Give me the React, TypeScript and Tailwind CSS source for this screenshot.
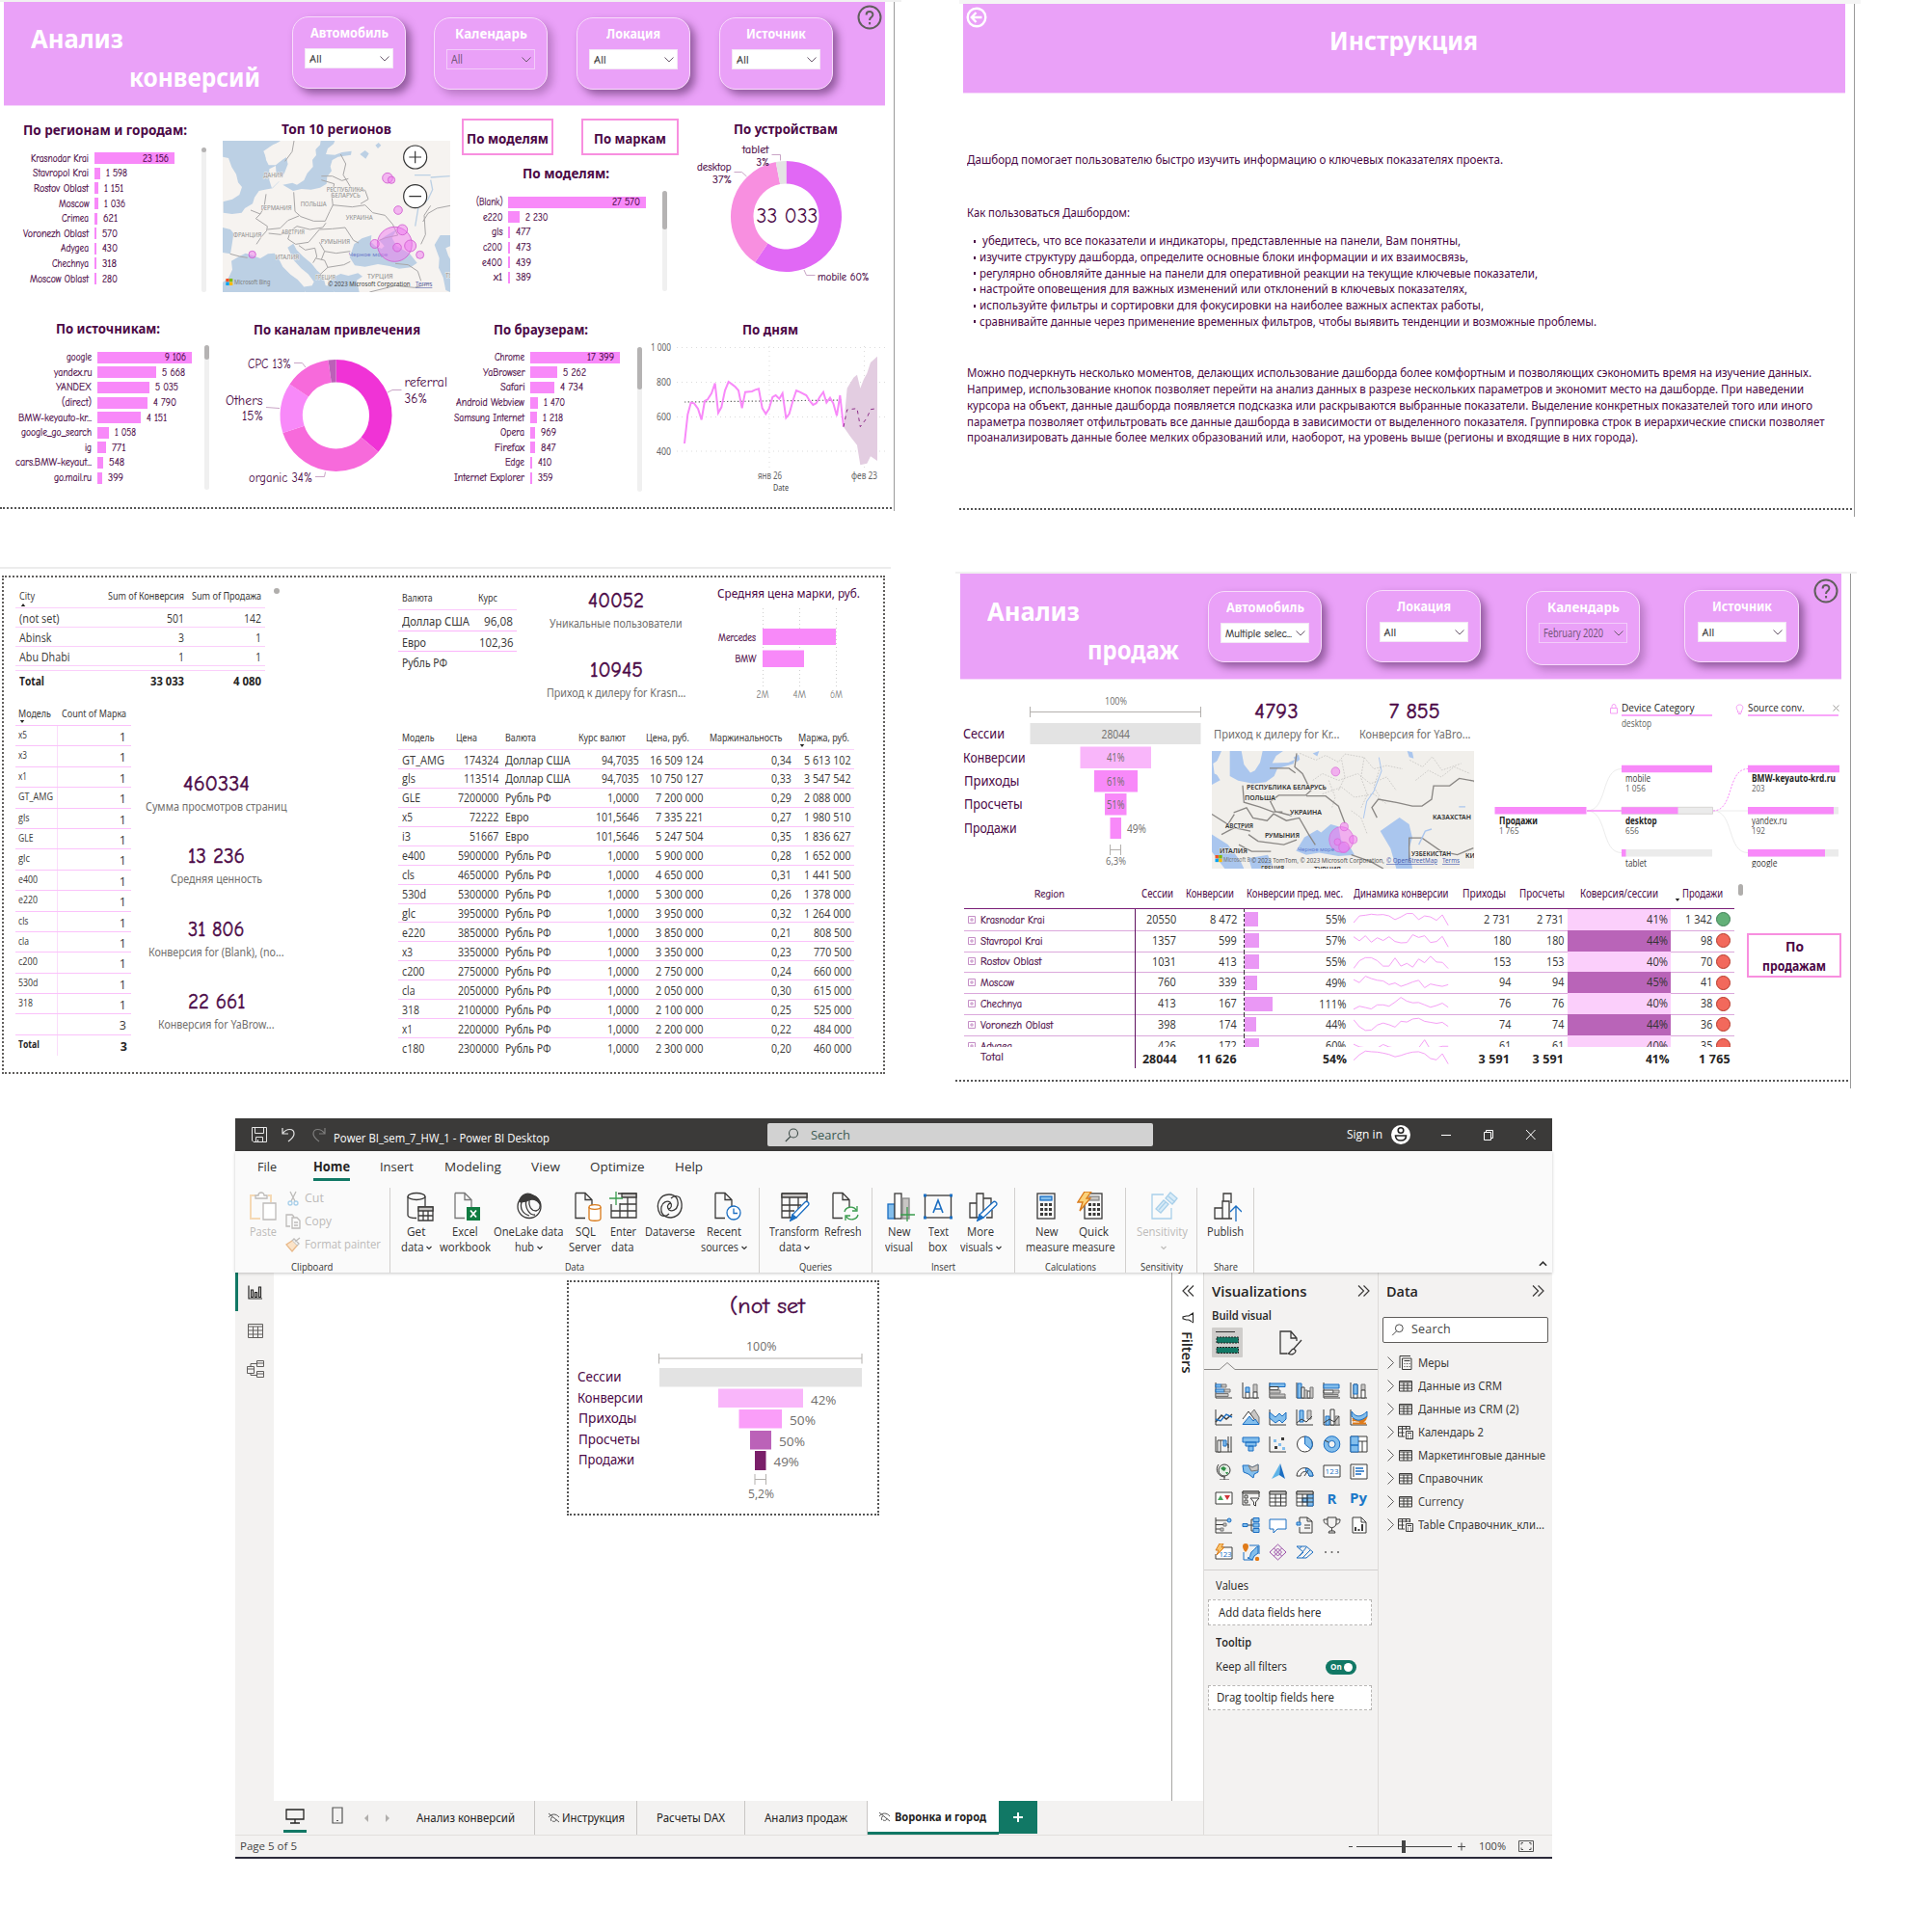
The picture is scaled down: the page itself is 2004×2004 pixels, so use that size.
import { useLayoutEffect, useRef, type ReactNode } from "react";

const COMIC = "font-['Comic_Neue','Noto_Sans',sans-serif]";
const SEGOE = "font-['Open_Sans','Noto_Sans',sans-serif]";
const CYRILLIC = "font-['Noto_Sans',sans-serif]";
const hasCyrillic = (s: string) => /[а-яё]/i.test(s);

/* One line of text that fills the given width: tracked out when short, condensed when long. */
function T({ w, className = "", children }: { w: number; className?: string; children: string }) {
  const ref = useRef<HTMLSpanElement>(null);
  useLayoutEffect(() => {
    const el = ref.current;
    if (!el) return;
    el.style.letterSpacing = "0px";
    el.style.transform = "none";
    const natural = el.getBoundingClientRect().width;
    if (natural > w) el.style.transform = `scaleX(${w / natural})`;
    else el.style.letterSpacing = `${(w - natural) / children.length}px`;
  }, [w, children]);
  return (
    <span className={`inline-block shrink-0 whitespace-pre ${className}`} style={{ width: w }}>
      <span ref={ref} className={`inline-block origin-left ${hasCyrillic(children) ? CYRILLIC : ""}`}>{children}</span>
    </span>
  );
}

type XProps = { x: number; y: number; w?: number; s?: number; a?: "start" | "middle" | "end"; f?: string; b?: number; children: string };
function X({ x, y, w, s = 12, a = "start", f = "#4b0846", b = 400, children }: XProps) {
  return (
    <text x={x} y={y} fontSize={s} textAnchor={a} textLength={w} lengthAdjust="spacingAndGlyphs" fill={f} fontWeight={b} className={hasCyrillic(children) ? CYRILLIC : ""}>
      {children}
    </text>
  );
}

/* ---------- shared dashboard pieces ---------- */

function HelpIcon({ className = "" }: { className?: string }) {
  return (
    <svg viewBox="0 0 26 26" className={`h-[26px] w-[26px] shrink-0 ${className}`} fill="none" stroke="#605e5c" strokeWidth="2">
      <circle cx="13" cy="13" r="11.5" />
      <path d="M9.6 10.4c0-4.4 6.8-4.4 6.8-.2 0 2.6-3.3 2.8-3.3 5.2v.6" />
      <path d="M13.1 18v2.4" />
    </svg>
  );
}

function Slicer({ title, tw, value, vw, off, className }: { title: string; tw: number; value: string; vw: number; off?: boolean; className: string }) {
  return (
    <div
      className={`flex shrink-0 flex-col items-center rounded-[17px] border border-[#f8dcfb] bg-[#eaa1f8] ${
        off ? "shadow-[5px_5px_9px_rgba(60,20,70,0.28)]" : "shadow-[5px_5px_8px_rgba(60,20,70,0.5)]"
      } ${className}`}
    >
      <T w={tw} className="mt-[6px] text-sm leading-5 font-bold text-white">{title}</T>
      <div
        className={`mt-[5px] flex h-[21px] w-[92px] items-center justify-between border pr-[3px] pl-1 text-xs ${
          off ? `border-[#f3ccfa] bg-transparent text-[#6d5273] ${SEGOE}` : "border-[#f3e6f5] bg-white text-[#333] [-webkit-text-stroke:0.2px_#333]"
        }`}
      >
        <T w={vw}>{value}</T>
        <svg viewBox="0 0 10 6" className="h-[6px] w-[10px]" fill="none" stroke="#6b5b6e" strokeWidth="1">
          <path d="M.5.5 5 5 9.5.5" />
        </svg>
      </div>
    </div>
  );
}

function Ruler({ w }: { w: string }) {
  return <div className={`h-[2px] shrink-0 bg-[#f1f1f1] ${w}`} />;
}

type Bar = [label: string, labelW: number, bar: number, value: string, valueW: number];

function Bars({ rows, labelClass, thumb, className, trackClass }: { rows: Bar[]; labelClass: string; thumb: string; className: string; trackClass: string }) {
  return (
    <div className="flex">
      <ul className={`shrink-0 ${className}`}>
        {rows.map(([label, lw, bar, value, vw], i) => (
          <li key={label} className="flex h-[15.6px] items-center text-xs leading-[15px] [-webkit-text-stroke:0.2px_#4b0846]">
            <span className={`flex shrink-0 justify-end ${labelClass}`}>
              <T w={lw}>{label}</T>
            </span>
            <span className="ml-[6px] flex h-3 shrink-0 items-center justify-end bg-[#f889f9]" style={{ width: bar, paddingRight: i ? 0 : 6 }}>
              {i === 0 && <T w={vw}>{value}</T>}
            </span>
            {i > 0 && <T w={vw} className="ml-[6px]">{value}</T>}
          </li>
        ))}
      </ul>
      <div className={`w-[5px] rounded-full bg-[#f0f0f0] ${trackClass}`}>
        <div className={`w-[5px] rounded-full bg-[#b5b3b3] ${thumb}`} />
      </div>
    </div>
  );
}

/* Ring segment between two fractions of the circle, clockwise from the top. */
function arc(cx: number, cy: number, R: number, r: number, from: number, to: number) {
  const p = (rad: number, t: number) => {
    const a = 2 * Math.PI * t;
    return `${(cx + rad * Math.sin(a)).toFixed(2)} ${(cy - rad * Math.cos(a)).toFixed(2)}`;
  };
  const big = to - from > 0.5 ? 1 : 0;
  return `M${p(R, from)}A${R} ${R} 0 ${big} 1 ${p(R, to)}L${p(r, to)}A${r} ${r} 0 ${big} 0 ${p(r, from)}Z`;
}

/* ---------- panel 1: conversions ---------- */

const regions: Bar[] = [
  ["Krasnodar Krai", 60, 83, "23 156", 27],
  ["Stavropol Krai", 58, 6, "1 598", 22],
  ["Rostov Oblast", 57, 4, "1 151", 20],
  ["Moscow", 31.5, 4, "1 036", 22],
  ["Crimea", 28, 2.5, "621", 15],
  ["Voronezh Oblast", 68, 2, "570", 16],
  ["Adygea", 29, 2, "430", 16],
  ["Chechnya", 38, 1.5, "318", 15],
  ["Moscow Oblast", 61, 1.5, "280", 16],
];
const models: Bar[] = [
  ["(Blank)", 27.5, 143, "27 570", 29],
  ["e220", 20.5, 12, "2 230", 23.5],
  ["gls", 11.5, 2, "477", 15.5],
  ["c200", 20, 2, "473", 16],
  ["e400", 21, 2, "439", 16],
  ["x1", 9, 2, "389", 16],
];
const sources: Bar[] = [
  ["google", 26, 98, "9 106", 22],
  ["yandex.ru", 39.5, 61, "5 668", 24],
  ["YANDEX", 37, 54, "5 035", 24],
  ["(direct)", 31, 52, "4 790", 24],
  ["BMW-keyauto-kr...", 76, 45, "4 151", 21],
  ["google_go_search", 73, 12, "1 058", 22],
  ["ig", 7, 9, "771", 14.5],
  ["cars.BMW-keyaut...", 79, 6, "548", 16],
  ["go.mail.ru", 39, 5, "399", 16],
];
const browsers: Bar[] = [
  ["Chrome", 31, 93, "17 399", 28],
  ["YaBrowser", 43.5, 28, "5 262", 24],
  ["Safari", 25.5, 25, "4 734", 24],
  ["Android Webview", 71, 8, "1 470", 22],
  ["Samsung Internet", 73, 6.5, "1 218", 21],
  ["Opera", 25, 5, "969", 16],
  ["Firefox", 31, 4.5, "847", 15.5],
  ["Edge", 20, 2, "410", 14.5],
  ["Internet Explorer", 73, 2, "359", 15.5],
];

function MsLogo({ x, y, s }: { x: number; y: number; s: number }) {
  return (
    <g>
      <rect x={x} y={y} width={s} height={s} fill="#f25022" />
      <rect x={x + s * 1.1} y={y} width={s} height={s} fill="#7fba00" />
      <rect x={x} y={y + s * 1.1} width={s} height={s} fill="#00a4ef" />
      <rect x={x + s * 1.1} y={y + s * 1.1} width={s} height={s} fill="#ffb900" />
    </g>
  );
}

function EuropeMap() {
  return (
    <svg viewBox="693 438 708 471" className="h-[157px] w-[236px] font-['Noto_Sans',sans-serif]">
      <rect x="693" y="438" width="708" height="471" fill="#f6f3f0" />
      <g fill="#bcd0e4">
        <path d="M693 438h180l-22 14-12 6-14 18 3 22 8 16 22 0 22-18 12-8 4 22-10 26-14 26-24 24-24 4-18 4-14 20-6 20-24 14-10 14-30 4-27-4z" />
        <path d="M880 575l30-6 14 6 22-14 10-22 18-20-2-22 12-14-2-18 14-14 2-13h44l-4 10-18 14-6 18 28 2 22-8 30-4-2 12-40 6-18 10-6 20 4 14-14 18-2 22-20 12-28 6-30-2-26 6z" />
        <path d="M693 708l24 6 10 12-4 28-6 36-24-4zM720 812l24-14 20-10 24 8 22 8 24-14 20-2 14 18 12 24 24 24 22 16 18 20 6 19H693v-30l18-14 12-26z" />
        <path d="M895 770l18-12 10 20 20 20 26 22 18 22 18 16 8 30 16 6 12 15h-90l-10-16 30-4 6-12-18-24-22-18-22-24z" />
        <path d="M1018 890l16-26 26-12 24 6 30-8 14 10-18 12 8 37h-76z" />
        <path d="M1088 800l14-40 24-18 30-10-2 20 14 14 20 8 8-8-16-18 20-14 34-20-14 26 14 26 40 22 24 30-20 14-36 4-30-8-36-6-40 8-32-4z" />
        <path d="M1352 762l18-30 31 0v34l-14 6 8 24 6 10v103l-14-6-8-40-14-30 2-30zM840 838l14-8 6 20-8 24-14-8zM846 796l8-6 4 24-8 8z" />
        <path d="M1120 480l16-12 12 10-10 16zM1168 452l10-8 8 8-10 10z" />
      </g>
      <g fill="#f6f3f0">
        <path d="M693 488l18 4 10 28 14 22 6 26 12 14-8 24-22 14-30 8z" />
        <path d="M838 526l20-10 2 30 14-2 6 16-14 6-20 20-8-26z" />
        <path d="M820 470l30-20 32-12h110l-10 26-8 30-20 22-16 36-14 10-14-18-14-36-6-20-18 14-26 6-16-12z" />
      </g>
      <g fill="none" stroke="#a8a6a6" strokeWidth="3">
        <path d="M915 438l-6 34-22 30M1060 480l16 30-8 34 24 40 44 8 10 28-24 14M1000 548l34 0 30 14 20-6M1000 560l40 12-8 34 4 34M914 598l4 60 18 16 40 14 36 0 14-30 10-20 60 6 40-6 24 24 38 8 24 28 16 34-38 8-20 8" />
        <path d="M828 604l-6 40-12 22-30-12M810 666l-14 14 36 24-2 14-16 18-16 24M832 714l40-4 24-24 34-14M836 726l38 4 30-12 20-14 40 10 40-6 10-14M904 718l-8 26 24 16 40-6 34-40 40-2 40-4 26 40 16 8M994 754l16 28 36 6 44-6M930 764l20 14 30-6 6 26-12 20M984 804l26 6 10 22-24 22M1020 832l50-8 20-10M1010 782l-10 26M716 790l30 8 24 4M1230 820l40 4 30 20 10 30M1150 909l80-20 60 6 50-14M1340 640l-20 30 4 60-14 30M1316 690l16-26 28-16 41-8" />
      </g>
      <path d="M1340 560l6 30-14 30-30 24-10 60M1290 545l50 0M1400 548l-60 4" fill="none" stroke="#bcd0e4" strokeWidth="4" />
      <g fill="#8d8d8d" fontSize="19" stroke="#f6f3f0" strokeWidth="3" paintOrder="stroke">
        <text x="820" y="551" textLength="60" lengthAdjust="spacingAndGlyphs">ДАНИЯ</text>
        <text x="1016" y="596" textLength="116" lengthAdjust="spacingAndGlyphs">РЕСПУБЛИКА</text>
        <text x="1031" y="614" textLength="90" lengthAdjust="spacingAndGlyphs">БЕЛАРУСЬ</text>
        <text x="935" y="641" textLength="81" lengthAdjust="spacingAndGlyphs">ПОЛЬША</text>
        <text x="812" y="654" textLength="96" lengthAdjust="spacingAndGlyphs">ГЕРМАНИЯ</text>
        <text x="1076" y="684" textLength="84" lengthAdjust="spacingAndGlyphs">УКРАИНА</text>
        <text x="726" y="737" textLength="88" lengthAdjust="spacingAndGlyphs">ФРАНЦИЯ</text>
        <text x="876" y="729" textLength="72" lengthAdjust="spacingAndGlyphs">АВСТРИЯ</text>
        <text x="998" y="758" textLength="91" lengthAdjust="spacingAndGlyphs">РУМЫНИЯ</text>
        <text x="857" y="807" textLength="74" lengthAdjust="spacingAndGlyphs">ИТАЛИЯ</text>
        <text x="982" y="869" textLength="62" lengthAdjust="spacingAndGlyphs">ГРЕЦИЯ</text>
        <text x="1143" y="868" textLength="80" lengthAdjust="spacingAndGlyphs">ТУРЦИЯ</text>
        <text x="1386" y="864">ТУ</text>
      </g>
      <text x="1085" y="799" fontSize="18" textLength="122" lengthAdjust="spacingAndGlyphs" fill="#6c77c9">Черное море</text>
      <g fill="#f07af0" fillOpacity=".5" stroke="#d05cd0" strokeWidth="2.5">
        <circle cx="1228" cy="760" r="54" />
        <circle cx="1206" cy="554" r="16" />
        <circle cx="1218" cy="560" r="11" />
        <circle cx="1239" cy="654" r="13" />
        <circle cx="1252" cy="715" r="16" />
        <circle cx="1166" cy="759" r="13.5" />
        <circle cx="1236" cy="770" r="13" />
        <circle cx="1277" cy="765" r="18" />
        <circle cx="1307" cy="793" r="12" />
        <circle cx="785" cy="792" r="11" />
      </g>
      <g fill="#fff" stroke="#333" strokeWidth="3.5">
        <circle cx="1292" cy="489" r="36" />
        <circle cx="1292" cy="611" r="36" />
        <path d="M1273 489h38M1292 470v38M1273 611h38" />
      </g>
      <MsLogo x={703} y={867} s={10} />
      <text x="729" y="886" fontSize="19" textLength="112" lengthAdjust="spacingAndGlyphs" fill="#7a7a7a">Microsoft Bing</text>
      <text x="1020" y="891" fontSize="19" textLength="257" lengthAdjust="spacingAndGlyphs" fill="#444">© 2023 Microsoft Corporation</text>
      <text x="1293" y="891" fontSize="19" textLength="52" lengthAdjust="spacingAndGlyphs" fill="#5a65a8" textDecoration="underline">Terms</text>
    </svg>
  );
}

const dayLine =
  "750,450 760,360 770,323 780,325 792,342 803,376 813,318 822,313 834,294 845,263 855,355 865,337 876,285 887,258 898,266 908,274 918,285 929,340 939,290 960,288 970,283 981,280 992,340 1003,358 1013,342 1024,306 1034,300 1045,311 1055,294 1066,370 1076,358 1087,318 1098,285 1109,290 1129,300 1140,318 1150,330 1160,325 1171,305 1182,290 1192,323 1203,308 1213,325 1224,364 1234,300 1245,398";

function Conversions() {
  return (
    <section className={`flex h-[530px] w-[928px] flex-col border-r border-[#9a9a9a] text-[#4b0846] ${COMIC}`}>
      <Ruler w="w-[935px]" />
      <header className="ml-1 flex h-[108px] w-[914px] shrink-0 border-b border-[#f6d5fb] bg-[#eaa1f8]">
        <h1 className="flex w-[299px] shrink-0 flex-col pt-[19px] pl-7 text-[27px] leading-[38px] font-bold text-white">
          <T w={96}>Анализ</T>
          <T w={136} className="ml-[102px]">конверсий</T>
        </h1>
        <Slicer title="Автомобиль" tw={81} value="All" vw={13} className="mt-[15px] h-[75px] w-[118px]" />
        <Slicer title="Календарь" tw={75} value="All" vw={12} off className="mt-4 ml-[29px] h-[75px] w-[118px]" />
        <Slicer title="Локация" tw={56} value="All" vw={13} className="mt-4 ml-[30px] h-[75px] w-[118px]" />
        <Slicer title="Источник" tw={62} value="All" vw={13} className="mt-4 ml-[30px] h-[75px] w-[118px]" />
        <HelpIcon className="mt-[3px] ml-[25px]" />
      </header>

      <div className="flex h-[200px] shrink-0">
        <div className="w-[231px]">
          <h2 className="mt-[14px] mb-[12.500px] flex h-5 pl-6 text-[15px] leading-5 font-bold"><T w={170}>По регионам и городам:</T></h2>
          <Bars rows={regions} labelClass="w-[92px]" className="w-[209px]" trackClass="-mt-1 h-[150px]" thumb="h-[5px]" />
        </div>
        <div className="w-[249px]">
          <h2 className="flex h-9 pt-[13px] pl-[61px] text-[15px] leading-5 font-bold"><T w={114}>Топ 10 регионов</T></h2>
          <EuropeMap />
        </div>
        <div className="w-[241px]">
          <div className="mt-[13px] flex gap-[29px] text-[15px] leading-5 font-bold">
            <div className="flex h-[38px] w-[95px] items-center justify-center border-2 border-[#f88fdf] pt-[2px]"><T w={85}>По моделям</T></div>
            <div className="flex h-[38px] w-[101px] items-center justify-center border-2 border-[#f88fdf] pt-[2px]"><T w={75}>По маркам</T></div>
          </div>
          <h2 className="mt-[8px] mb-[13px] flex h-5 pl-[63px] text-[15px] leading-5 font-bold"><T w={90}>По моделям:</T></h2>
          <Bars rows={models} labelClass="w-[42px]" className="w-[208px]" trackClass="-mt-1 h-[104px]" thumb="h-10" />
        </div>
        <div className="w-[207px]">
          <h2 className="flex h-[34px] pt-[13px] pl-[41px] text-[15px] leading-5 font-bold"><T w={108}>По устройствам</T></h2>
          <svg viewBox="720 144 208 160" className="h-[160px] w-[208px]">
            <path d={arc(815.5, 224.5, 57.5, 34, 0, 0.595)} fill="#e168f5" />
            <path d={arc(815.5, 224.5, 57.5, 34, 0.595, 0.97)} fill="#f88fe0" />
            <path d={arc(815.5, 224.5, 57.5, 34, 0.97, 1)} fill="#e4e4e4" />
            <path d="M800.5 160.5h9v6M761.5 178.5h8l5 4.500M834 280l2.500 5.500h9" fill="none" stroke="#c9a5c6" />
            <X x={784.5} y={231} w={64} s={22}>33 033</X>
            <g stroke="#4b0846" strokeWidth=".2">
              <X x={770} y={158.500} w={27.500}>tablet</X>
              <X x={784.500} y={172} w={13.500}>3%</X>
              <X x={723} y={176.500} w={35.500}>desktop</X>
              <X x={739} y={190} w={20}>37%</X>
              <X x={848} y={290.500} w={53.500}>mobile 60%</X>
            </g>
          </svg>
        </div>
      </div>

      <div className="flex h-[216px] shrink-0">
        <div className="w-[255px]">
          <h2 className="mt-[20px] mb-[13px] flex h-5 pl-[58px] text-[15px] leading-5 font-bold"><T w={108}>По источникам:</T></h2>
          <Bars rows={sources} labelClass="w-[95px]" className="w-[212px]" trackClass="-mt-[5px] h-[150px]" thumb="h-[15px]" />
        </div>
        <div className="w-[212px]">
          <h2 className="mt-[21px] mb-[1px] flex h-5 pl-2 text-[15px] leading-5 font-bold"><T w={173}>По каналам привлечения</T></h2>
          <svg viewBox="225 352 245 160" className="-ml-[30px] h-[160px] w-[245px]">
            <path d={arc(348.5, 431, 58, 34.5, 0, 0.363)} fill="#f033d6" />
            <path d={arc(348.5, 431, 58, 34.5, 0.363, 0.7)} fill="#f76adb" />
            <path d={arc(348.5, 431, 58, 34.5, 0.7, 0.845)} fill="#f889f9" />
            <path d={arc(348.5, 431, 58, 34.5, 0.845, 0.978)} fill="#f76adb" />
            <path d={arc(348.5, 431, 58, 34.5, 0.978, 1)} fill="#bc60b8" />
            <path d="M305 376.500h8.500l3.500 4.500M276 422.500l14 1M402 407l5-2.500h9.500M327 494.500h9.500l1-5" fill="none" stroke="#c9a5c6" />
            <X x={257} y={382} w={45} s={14}>CPC 13%</X>
            <X x={234} y={420} w={38.500} s={14}>Others</X>
            <X x={251} y={436} w={22} s={14}>15%</X>
            <X x={419.500} y={401} w={44.500} s={14}>referral</X>
            <X x={419.500} y={418} w={23.500} s={14}>36%</X>
            <X x={258} y={500} w={66} s={14}>organic 34%</X>
          </svg>
        </div>
        <div className="w-[205px]">
          <h2 className="mt-[21px] mb-[12px] flex h-5 pl-[45px] text-[15px] leading-5 font-bold"><T w={98}>По браузерам:</T></h2>
          <Bars rows={browsers} labelClass="w-[77px]" className="w-[194px]" trackClass="-mt-[3px] h-[150px]" thumb="h-[44px]" />
        </div>
        <div className="w-[250px]">
          <h2 className="mt-[21px] mb-[1px] flex h-5 pl-[98px] text-[15px] leading-5 font-bold"><T w={58}>По дням</T></h2>
          <svg viewBox="672 352 250 164" className="h-[164px] w-[250px] font-['Noto_Sans',sans-serif]">
            <path d="M702 360.500H918M702 396.500H918M702 432.500H918M702 468H918M798 359V487M896.500 359V487" stroke="#dcdcdc" strokeDasharray="1 4" />
            <g transform="translate(460 310) scale(.33333)">
              <path d="M1245 398L1256 278 1276 245 1287 236 1297 278 1308 250 1318 232 1329 198 1350 179V504L1329 490 1318 512 1297 517 1287 455 1266 428Z" fill="#e3cde1" />
              <path d="M750 321L1240 315" stroke="#666" strokeWidth="3.500" strokeDasharray="4 7" />
              <polyline points={dayLine} fill="none" stroke="#f889f9" strokeWidth="6" />
              <path d="M1245 398L1256 345 1287 341 1297 398 1318 370 1329 344 1350 341" fill="none" stroke="#8f2f8a" strokeWidth="3" strokeDasharray="11 12" />
            </g>
            <X x={696} y={363.500} w={21} s={11} a="end" f="#666">1 000</X>
            <X x={696} y={399.500} w={15} s={11} a="end" f="#666">800</X>
            <X x={696} y={435.500} w={15} s={11} a="end" f="#666">600</X>
            <X x={696} y={471.500} w={15} s={11} a="end" f="#666">400</X>
            <X x={786} y={497} w={25} s={10.500} f="#666">янв 26</X>
            <X x={883} y={497} w={27} s={10.500} f="#666">фев 23</X>
            <X x={802} y={509} w={16} s={9} f="#444">Date</X>
          </svg>
        </div>
      </div>
      <div className="w-[925px] border-t-2 border-dotted border-[#555]" />
    </section>
  );
}

/* ---------- panel 2: instructions ---------- */

const bullets: [string, number][] = [
  [" убедитесь, что все показатели и индикаторы, представленные на панели, Вам понятны,", 499],
  ["изучите структуру дашборда, определите основные блоки информации и их взаимосвязь,", 507],
  ["регулярно обновляйте данные на панели для оперативной реакции на текущие ключевые показатели,", 579],
  ["настройте оповещения для важных изменений или отклонений в ключевых показателях,", 506],
  ["используйте фильтры и сортировки для фокусировки на наиболее важных аспектах работы,", 523],
  ["сравнивайте данные через применение временных фильтров, чтобы выявить тенденции и возможные проблемы.", 640],
];
const closing: [string, number][] = [
  ["Можно подчеркнуть несколько моментов, делающих использование дашборда более комфортным и позволяющих сэкономить время на изучение данных.", 876],
  ["Например, использование кнопок позволяет перейти на анализ данных в разрезе нескольких параметров и экономит место на дашборде. При наведении", 868],
  ["курсора на объект, данные дашборда появляется подсказка или раскрываются выбранные показатели. Выделение конкретных показателей того или иного", 877],
  ["параметра позволяет отфильтровать все данные дашборда в зависимости от выделенного показателя. Группировка строк в иерархические списки позволяет", 889.5],
  ["проанализировать данные более мелких образований или, наоборот, на уровень выше (регионы и входящие в них города).", 696],
];

function Instructions() {
  return (
    <section className={`flex h-[536px] w-[929px] flex-col border-r border-[#9a9a9a] text-[#4b0846] ${COMIC}`}>
      <div className="h-1 w-[935px] shrink-0 bg-[#f5f5f5]" />
      <header className="ml-1 flex h-[93px] w-[915px] shrink-0 border-b border-[#f6d5fb] bg-[#eaa1f8]">
        <svg viewBox="0 0 22 22" className="mt-[3px] ml-[3px] h-[22px] w-[22px]" fill="none" stroke="#fff" strokeWidth="2.400">
          <circle cx="11" cy="11" r="9.300" />
          <path d="M16.500 11H6M10.500 6L5.800 11l4.700 5" />
        </svg>
        <h1 className="mt-[18px] ml-[355px] text-[27px] leading-10 font-bold text-white"><T w={154}>Инструкция</T></h1>
      </header>
      <div className="flex flex-col pl-2 text-xs leading-[17px]">
        <T w={556} className="mt-[60px]">Дашборд помогает пользователю быстро изучить информацию о ключевых показателях проекта.</T>
        <T w={169} className="mt-[37px]">Как пользоваться Дашбордом:</T>
        <ul className="mt-[12px] flex flex-col">
          {bullets.map(([t, w]) => (
            <li key={t} className="flex h-[16.700px] items-center gap-[4px] pl-[7px]">
              <span className="h-[3px] w-[2px] bg-[#4b0846]" />
              <T w={w}>{t}</T>
            </li>
          ))}
        </ul>
        <div className="mt-[37px] flex flex-col leading-[16.800px]">
          {closing.map(([t, w]) => <T key={t} w={w}>{t}</T>)}
        </div>
      </div>
      <div className="mt-auto mb-[7px] w-[926px] border-t-2 border-dotted border-[#555]" />
    </section>
  );
}

/* ---------- panel 3: DAX tables ---------- */

const priceRows = [
  ["GT_AMG", "174324", "Доллар США", "94,7035", "16 509 124", "0,34", "5 613 102"],
  ["gls", "113514", "Доллар США", "94,7035", "10 750 127", "0,33", "3 547 542"],
  ["GLE", "7200000", "Рубль РФ", "1,0000", "7 200 000", "0,29", "2 088 000"],
  ["x5", "72222", "Евро", "101,5646", "7 335 221", "0,27", "1 980 510"],
  ["i3", "51667", "Евро", "101,5646", "5 247 504", "0,35", "1 836 627"],
  ["e400", "5900000", "Рубль РФ", "1,0000", "5 900 000", "0,28", "1 652 000"],
  ["cls", "4650000", "Рубль РФ", "1,0000", "4 650 000", "0,31", "1 441 500"],
  ["530d", "5300000", "Рубль РФ", "1,0000", "5 300 000", "0,26", "1 378 000"],
  ["glc", "3950000", "Рубль РФ", "1,0000", "3 950 000", "0,32", "1 264 000"],
  ["e220", "3850000", "Рубль РФ", "1,0000", "3 850 000", "0,21", "808 500"],
  ["x3", "3350000", "Рубль РФ", "1,0000", "3 350 000", "0,23", "770 500"],
  ["c200", "2750000", "Рубль РФ", "1,0000", "2 750 000", "0,24", "660 000"],
  ["cla", "2050000", "Рубль РФ", "1,0000", "2 050 000", "0,30", "615 000"],
  ["318", "2100000", "Рубль РФ", "1,0000", "2 100 000", "0,25", "525 000"],
  ["x1", "2200000", "Рубль РФ", "1,0000", "2 200 000", "0,22", "484 000"],
  ["c180", "2300000", "Рубль РФ", "1,0000", "2 300 000", "0,20", "460 000"],
];
const currencyW: Record<string, number> = { "Доллар США": 67.5, "Рубль РФ": 47.5, "Евро": 24.5 };
const modelW: Record<string, number> = { GT_AMG: 44, gls: 14, GLE: 19, x5: 11, i3: 9, e400: 24, cls: 13, "530d": 25, glc: 14, e220: 24, x3: 11, c200: 23.5, cla: 13.5, "318": 18, x1: 11, c180: 23.5 };

/* Width of a figure from its digits, thin spaces and commas. */
function figW(s: string, digit: number) {
  return [...s].reduce((sum, c) => sum + (c === " " ? digit * 0.55 : c === "," ? digit * 0.42 : digit), 0);
}

const countRows = ["x5", "x3", "x1", "GT_AMG", "gls", "GLE", "glc", "e400", "e220", "cls", "cla", "c200", "530d", "318", ""];
const countW: Record<string, number> = { x5: 9, x3: 9, x1: 9, GT_AMG: 36, gls: 11.5, GLE: 15.5, glc: 12, e400: 20, e220: 20, cls: 10.5, cla: 11, c200: 20, "530d": 20.5, "318": 15 };

function Kpi({ value, vw, label, lw, className = "" }: { value: string; vw: number; label: string; lw: number; className?: string }) {
  return (
    <div className={`flex flex-col items-center ${className}`}>
      <T w={vw} className={`text-[22px] leading-6 text-[#4b0846] [-webkit-text-stroke:0.5px_#4b0846] ${COMIC}`}>{value}</T>
      <T w={lw} className="text-[12.500px] leading-[23px] text-[#706e6c]">{label}</T>
    </div>
  );
}

const Caret = ({ up }: { up?: boolean }) => (
  <svg viewBox="0 0 6 4" className="h-[3px] w-[6px]" fill="#252423"><path d={up ? "M0 4L3 0l3 4z" : "M0 0l3 4 3-4z"} /></svg>
);

function DaxTables() {
  return (
    <section className={`h-[530px] w-[924px] border-t-2 border-[#ececec] pt-[7px] pl-[2px] text-[#3a3837] ${SEGOE}`}>
      <div className="flex h-[517px] w-[916px] border-2 border-dotted border-[#605e5c]">
        <div className="w-[409px] shrink-0 pl-3">
          <div className="flex">
            <div className="w-[259px]">
              <div className="flex h-[32px] border-b border-[#fbcffb] pt-[10px] pl-1 text-[11px] leading-[18px]">
                <span className="flex w-[92px] flex-col"><T w={16}>City</T><span className="-mt-[1px] ml-px leading-none"><Caret up /></span></span>
                <T w={79}>Sum of Конверсия</T>
                <T w={72} className="ml-2">Sum of Продажа</T>
              </div>
              {([["(not set)", 41.5, "501", "142"], ["Abinsk", 33.5, "3", "1"], ["Abu Dhabi", 52.5, "1", "1"]] as const).map(([c, w, a, b]) => (
                <div key={c} className="flex h-5 items-center border-b border-[#fbcffb] pt-[3px] pl-1 text-xs">
                  <T w={w}>{c}</T>
                  <span className="ml-auto flex justify-end"><T w={figW(a, 6)}>{a}</T></span>
                  <span className="mr-1 flex w-[80px] justify-end"><T w={figW(b, 6)}>{b}</T></span>
                </div>
              ))}
              <div className="mt-[4px] flex h-7 items-center border-t border-[#fbcffb] pb-[5px] pl-1 text-[12.500px] font-bold text-[#252423]">
                <T w={26}>Total</T>
                <span className="ml-auto"><T w={35}>33 033</T></span>
                <span className="mr-1 flex w-[80px] justify-end"><T w={29}>4 080</T></span>
              </div>
            </div>
            <span className="mt-[11px] ml-[9px] h-[6px] w-[6px] rounded-full bg-[#b0aeac]" />
          </div>
          <div className="mt-px flex">
            <div className="w-[120px]">
              <div className="flex h-[29px] border-b border-[#fbc2fb] pt-[7px] pl-[3px] text-[11px] leading-[18px]">
                <span className="flex w-[45px] flex-col"><T w={34}>Модель</T><span className="-mt-[2px] ml-px leading-none"><Caret /></span></span>
                <T w={67}>Count of Марка</T>
              </div>
              {countRows.map((m) => (
                <div key={m} className="flex h-[21.400px] border-b border-[#fbc2fb] pl-[3px]">
                  <span className="w-[41px] border-r border-[#fbdcfb] text-[11px] leading-[18px]">{m && <T w={countW[m]}>{m}</T>}</span>
                  <span className="mr-[5px] ml-auto text-[12.500px] leading-6">{m ? "1" : "3"}</span>
                </div>
              ))}
              <div className="flex h-[21px] pl-[3px] font-bold text-[#252423]">
                <span className="w-[41px] border-r border-[#fbdcfb] text-[11px] leading-[17px]"><T w={22}>Total</T></span>
                <span className="mr-1 ml-auto text-[12.500px] leading-[23px]">3</span>
              </div>
            </div>
            <div className="ml-[2px] flex w-[173px] flex-col gap-[28.300px] pt-[77px]">
              <Kpi value="460334" vw={69} label="Сумма просмотров страниц" lw={146.500} />
              <Kpi value="13 236" vw={59} label="Средняя ценность" lw={95} />
              <Kpi value="31 806" vw={58.500} label="Конверсия for (Blank), (no..." lw={140.500} />
              <Kpi value="22 661" vw={59.500} label="Конверсия for YaBrow..." lw={120.500} />
            </div>
          </div>
        </div>

        <div className="w-[490px]">
          <div className="flex h-[148px]">
            <div className="w-[123px]">
              <div className="flex h-[34px] gap-[47px] border-b border-[#fbc8fb] pt-[12px] pl-1 text-[11px] leading-[18px]">
                <T w={31.500}>Валюта</T>
                <T w={20}>Курс</T>
              </div>
              <div className="flex h-[22px] items-center justify-between border-b border-[#fbb4fb] px-1 pt-[2px] text-xs"><T w={70}>Доллар США</T><T w={30}>96,08</T></div>
              <div className="flex h-[21px] items-center justify-between border-b border-[#fbb4fb] px-1 pt-[3px] text-xs"><T w={25}>Евро</T><T w={35.500}>102,36</T></div>
              <div className="flex h-[21px] items-center px-1 pt-[2px] text-xs"><T w={47}>Рубль РФ</T></div>
            </div>
            <div className="ml-[14px] flex w-[178px] flex-col pt-3">
              <Kpi value="40052" vw={58} label="Уникальные пользователи" lw={137.500} />
              <Kpi value="10945" vw={55} label="Приход к дилеру for Krasn..." lw={144.500} className="mt-[25px]" />
            </div>
            <svg viewBox="728 599 175 140" className={`h-[140px] w-[175px] ${COMIC}`}>
              <X x={744} y={619.500} w={148} s={12.500}>Средняя цена марки, руб.</X>
              <path d="M791.500 631V712M829.500 631V712M867.500 631V712" stroke="#cfcfcf" strokeDasharray="1 3" />
              <rect x="791" y="652" width="76" height="17" fill="#f889f9" />
              <rect x="791" y="674.500" width="43" height="17.500" fill="#f889f9" />
              <g stroke="#4b0846" strokeWidth=".2">
                <X x={745} y={664.500} w={39} s={11}>Mercedes</X>
                <X x={762.500} y={686.500} w={22} s={11}>BMW</X>
              </g>
              <X x={784.500} y={723.500} w={13} s={11} f="#777">2M</X>
              <X x={822.500} y={723.500} w={13.500} s={11} f="#777">4M</X>
              <X x={861} y={723.500} w={13} s={11} f="#777">6M</X>
            </svg>
          </div>
          <div className="w-[473px]">
            <div className="grid h-[31px] grid-cols-[57px_47px_80px_66px_66px_92px_65px] border-b border-[#fbd3fb] pt-[9px] text-[11px] leading-[18px]">
              <T w={33.500} className="ml-1">Модель</T>
              <T w={22} className="ml-[3px]">Цена</T>
              <T w={32} className="ml-[7px]">Валюта</T>
              <T w={49} className="ml-[3px]">Курс валют</T>
              <T w={45} className="ml-[7px]">Цена, руб.</T>
              <T w={75.500} className="ml-[7px]">Маржинальность</T>
              <span className="ml-[7px] flex flex-col"><T w={53}>Маржа, руб.</T><span className="-mt-[2px] ml-px leading-none"><Caret /></span></span>
            </div>
            {priceRows.map((r, i) => (
              <div key={r[0]} className={`grid h-[19.950px] grid-cols-[57px_47px_80px_66px_66px_92px_62px_3px] items-center pt-[1.500px] text-[12.500px] leading-[18px] ${i < 15 ? "border-b border-[#fbc2fb]" : ""}`}>
                <T w={modelW[r[0]]} className="ml-1">{r[0]}</T>
                <span className="flex justify-end"><T w={figW(r[1], 6.050)}>{r[1]}</T></span>
                <T w={currencyW[r[2]]} className="ml-[7px]">{r[2]}</T>
                <span className="flex justify-end"><T w={figW(r[3], 6.050)}>{r[3]}</T></span>
                <span className="flex justify-end"><T w={figW(r[4], 6.100)}>{r[4]}</T></span>
                <span className="flex justify-end"><T w={figW(r[5], 6.100)}>{r[5]}</T></span>
                <span className="flex justify-end"><T w={figW(r[6], 6)}>{r[6]}</T></span>
              </div>
            ))}
          </div>
        </div>
      </div>
    </section>
  );
}

/* ---------- panel 4: sales ---------- */

type Sale = { name: string; nw: number; v: [string, string, number, string, string, string, string, string]; dark?: boolean; ok?: boolean; line: number[] };
const sales: Sale[] = [
  { name: "Krasnodar Krai", nw: 66.5, v: ["20550", "8 472", 14, "55%", "2 731", "2 731", "41%", "1 342"], ok: true, line: [40, 20, 18, 15, 17, 16, 20, 31, 23, 13, 13, 31, 20, 23, 33, 17, 48] },
  { name: "Stavropol Krai", nw: 64.5, v: ["1357", "599", 14.5, "57%", "180", "180", "44%", "98"], dark: true, line: [19, 31, 16, 35, 22, 30, 19, 33, 37, 36, 13, 21, 16, 36, 33, 18, 49] },
  { name: "Rostov Oblast", nw: 63.5, v: ["1031", "413", 14.5, "55%", "153", "153", "40%", "70"], line: [50, 27, 18, 18, 27, 43, 43, 19, 43, 35, 46, 22, 33, 14, 31, 32, 50] },
  { name: "Moscow", nw: 35, v: ["760", "339", 12.5, "49%", "94", "94", "45%", "41"], dark: true, line: [23, 32, 13, 20, 25, 27, 38, 33, 43, 37, 30, 25, 47, 36, 40, 43, 38] },
  { name: "Chechnya", nw: 43, v: ["413", "167", 29, "111%", "76", "76", "40%", "38"], line: [48, 39, 43, 47, 35, 35, 39, 27, 13, 24, 29, 28, 35, 42, 37, 30, 42] },
  { name: "Voronezh Oblast", nw: 75.5, v: ["398", "174", 11.5, "44%", "74", "74", "44%", "36"], dark: true, line: [16, 37, 48, 47, 32, 26, 31, 38, 21, 23, 14, 12, 21, 24, 27, 24, 36] },
  { name: "Adygea", nw: 33, v: ["426", "172", 15, "60%", "61", "61", "40%", "35"], line: [26, 34, 36, 39, 37, 27, 34, 37, 50, 50, 50, 37, 13, 42, 37, 32, 32] },
];

function Spark({ pts }: { pts: number[] }) {
  return (
    <svg viewBox="0 0 99 62" preserveAspectRatio="none" className="h-[21.800px] w-[99px]">
      <polyline points={pts.map((p, i) => `${(i * 6.14).toFixed(1)},${p}`).join(" ")} fill="none" stroke="#f5a0f5" strokeWidth="1" vectorEffect="non-scaling-stroke" />
    </svg>
  );
}

function Funnel() {
  return (
    <svg viewBox="996 720 256 184" className="h-[184px] w-[256px]">
      <g className={SEGOE}>
        <X x={1146} y={732} w={23} s={11} f="#706e6c">100%</X>
        <path d="M1068.500 739.500H1245.500M1068.500 734V745M1245.500 734V745M1151.500 882.500H1162.500M1151.500 877V888M1162.500 877V888" stroke="#b3b0ad" />
        <rect x="1068.500" y="751" width="177" height="22" fill="#e3e3e3" />
        <rect x="1120.500" y="775.500" width="73.500" height="22.500" fill="#f9b6fa" />
        <rect x="1135" y="800" width="45" height="22.500" fill="#f889f9" />
        <rect x="1146" y="824" width="22.500" height="22.500" fill="#f889f9" />
        <rect x="1151.500" y="849" width="11.500" height="22" fill="#f889f9" />
        <X x={1142.500} y={767} w={29.500} f="#706e6c">28044</X>
        <X x={1148} y={791} w={18.500} f="#706e6c">41%</X>
        <X x={1148} y={815.500} w={18.500} f="#706e6c">61%</X>
        <X x={1148} y={840} w={18.500} f="#706e6c">51%</X>
        <X x={1169} y={864.500} w={20} f="#706e6c">49%</X>
        <X x={1147} y={898} w={21} s={11} f="#706e6c">6,3%</X>
      </g>
      <g>
        <X x={999} y={766.500} w={43} s={14}>Сессии</X>
        <X x={999} y={791.500} w={64.500} s={14}>Конверсии</X>
        <X x={1000} y={815.500} w={57.500} s={14}>Приходы</X>
        <X x={1000} y={839.500} w={60.500} s={14}>Просчеты</X>
        <X x={1000} y={864.500} w={54.500} s={14}>Продажи</X>
      </g>
    </svg>
  );
}

function RegionMap() {
  return (
    <svg viewBox="1257 779 272 122" className="h-[122px] w-[272px] font-['Noto_Sans',sans-serif]">
      <rect x="1257" y="779" width="272" height="122" fill="#f1efeb" />
      <g transform="translate(985 585) scale(.33333 .35075)">
        <g fill="#aac6ee">
          <path d="M816 553h30l-14 30-4 34 14 22-26 14zM872 553h36l8 40 20 24 14-6 16-24 8-34h64l-22 14-12 22 50-2 20-8-4 12-50 14-10 22-26 18-40 4-46-8-26-14z" />
          <path d="M1078 848l26-40 40-22 12 8 30-24 24 6 8 40 30 24 12 20-50 4-60-10-40 6z" />
          <path d="M1340 790l60-40 30 20 10 40-10 30 10 61h-50l-18-60zM816 800l50 30 40 50 10 21h-60l-40-50zM930 870l60-10 20 41h-70z" />
          <path d="M1070 572l16-8 4 14-10 8zM1130 560l20-7-6 16zM1424 553l16 4 4 18-14-4z" />
        </g>
        <path d="M820 590l16-10 10 24-8 22-14-6z" fill="#f1efeb" />
        <g fill="none" stroke="#bdbbb8" strokeWidth="2" strokeDasharray="5 4">
          <path d="M1090 560l50 20 30-14 40 20 20-24 60 10 30 34 40-10 50 10M1130 640l30-20 50 20 60-20 40 30 50-20 30 40M1160 680l60-20 40 30 60-10 40 30M1220 580l10 50-20 40M1290 572l-10 60 20 50-20 40M1340 600l-20 60 20 30M1432 580l40 20 30-30 30 40 60-20M1450 640l40-30 40 20 40-30 50 20M1250 730l30 20 20 50M1180 640l20 50-10 30" />
        </g>
        <g fill="none" stroke="#8a8784" strokeWidth="4">
          <path d="M996 604l60 0 20 14M1080 560l-6 40 24 20 26 50-16 14-84 0-26 18 16 30 50 12M912 655l4 50 50 14 40 14 30 0M1110 686l60 0 40 30 20 50M884 735l40-14 20 30 44 8 20-20 40 20 40-8 30 50 20 30M930 800l30 20 80 10 40-14M816 740l50 30 20-30M846 800l40-20 50 10M900 830l40 20 60 0M1250 860l60 20 40 21M1330 750l-16-30 20-24 60 10 46 10 30 0 30-20 6-40 50 0 30-22 46 8 10 20M1430 880v-70l40 0 60 40 50 10 50-20" />
        </g>
        <path d="M1336 572l8 40-24 60-22 30-10 50" fill="none" stroke="#aac6ee" strokeWidth="3" />
        <path d="M1460 830l20-40 20-6M1585 718l20 0" stroke="#aac6ee" strokeWidth="4" fill="none" />
        <g fill="#f07af0" fillOpacity=".55" stroke="#d868d8" strokeWidth="2">
          <circle cx="1219" cy="815" r="38" />
          <circle cx="1201" cy="614" r="13" />
          <circle cx="1228" cy="777" r="12" />
          <circle cx="1256" cy="815" r="12" />
          <circle cx="1207" cy="822" r="10" />
          <circle cx="1227" cy="838" r="16" />
        </g>
      </g>
      <g fill="#333" fontSize="6.800" fontWeight="600" stroke="#f1efeb" strokeWidth="1" paintOrder="stroke">
        <text x="1293" y="818.500" textLength="83" lengthAdjust="spacingAndGlyphs">РЕСПУБЛИКА БЕЛАРУСЬ</text>
        <text x="1291" y="829.500" textLength="32" lengthAdjust="spacingAndGlyphs">ПОЛЬША</text>
        <text x="1338" y="844.500" textLength="33" lengthAdjust="spacingAndGlyphs">УКРАИНА</text>
        <text x="1271" y="858.500" textLength="29" lengthAdjust="spacingAndGlyphs">АВСТРИЯ</text>
        <text x="1312" y="869" textLength="36" lengthAdjust="spacingAndGlyphs">РУМЫНИЯ</text>
        <text x="1265" y="885" textLength="29" lengthAdjust="spacingAndGlyphs">ИТАЛИЯ</text>
        <text x="1486" y="850" textLength="40" lengthAdjust="spacingAndGlyphs">КАЗАХСТАН</text>
        <text x="1464" y="887.500" textLength="41" lengthAdjust="spacingAndGlyphs">УЗБЕКИСТАН</text>
        <text x="1520" y="890">КИ</text>
        <text x="1308" y="903" textLength="24" lengthAdjust="spacingAndGlyphs">ГРЕЦИЯ</text>
        <text x="1363" y="904" textLength="28" lengthAdjust="spacingAndGlyphs">ТУРЦИЯ</text>
      </g>
      <text x="1346" y="883" fontSize="6" textLength="38" lengthAdjust="spacingAndGlyphs" fill="#5b78cf">Черное море</text>
      <MsLogo x={1260.500} y={887} s={3.400} />
      <g fontSize="6.300" fill="#555">
        <text x="1269" y="893.500" textLength="28" lengthAdjust="spacingAndGlyphs" fill="#777">Microsoft B</text>
        <text x="1298" y="895" textLength="138" lengthAdjust="spacingAndGlyphs">© 2023 TomTom, © 2023 Microsoft Corporation,</text>
        <text x="1438" y="895" textLength="53" lengthAdjust="spacingAndGlyphs" fill="#4a5fb0" textDecoration="underline">© OpenStreetMap</text>
        <text x="1496" y="895" textLength="18" lengthAdjust="spacingAndGlyphs" fill="#4a5fb0" textDecoration="underline">Terms</text>
      </g>
    </svg>
  );
}

function DecompositionTree() {
  return (
    <svg viewBox="1547 720 368 181" className={`h-[181px] w-[368px] ${SEGOE}`}>
      <g fill="none" stroke="#f59df5">
        <path d="M1670.500 735.500h7v5.500h-7zM1672 735.500v-2a2 2 0 0 1 4 0v2" />
        <path d="M1802.500 738c-2-2-2-6 2-6s4 4 2 6v2h-4zM1803 741.500h3" />
      </g>
      <X x={1682} y={739} w={75.500} s={11.500} f="#252423">Device Category</X>
      <X x={1813} y={739} w={58.500} s={11.500} f="#252423">Source conv.</X>
      <X x={1682} y={755} w={31} s={10.500} f="#605e5c">desktop</X>
      <path d="M1682 743h94M1813 743h94" stroke="#f889f9" strokeWidth="1.500" />
      <path d="M1901.500 732.500l6 6M1907.500 732.500l-6 6" stroke="#a19f9d" />
      <g fill="none" stroke="#ececec">
        <path d="M1646 842c22 0 14-43.500 36-43.500M1646 842c22 0 14 43.500 36 43.500M1777 842h36M1777 842c22 0 14 43.500 36 43.500" />
        <path d="M1646 842h36" stroke="#f889f9" strokeWidth="1.500" />
        <path d="M1777 842c22 0 14-43.500 36-43.500" stroke="#f889f9" strokeDasharray="2 1.500" />
      </g>
      <g fill="#ebebeb">
        <path d="M1682 882h94v7.500h-94zM1813 838h94v7.500h-94zM1813 882h94v7.500h-94z" />
        <path d="M1682 838.300h94.500v7h-94.500z" stroke="#d0cecc" strokeWidth=".8" />
      </g>
      <path
        d="M1550.500 838h95v7.500h-95zM1682 794.700h94v7.500h-94zM1682 838.300h58.500v7H1682zM1682 882h4.500v7.500h-4.500zM1813 794.700h95v7.500h-95zM1813 838h89v7.500h-89zM1813 882h80v7.500h-80z"
        fill="#f889f9"
      />
      <g>
        <X x={1555} y={856} w={40} s={10.500} b={700} f="#252423">Продажи</X>
        <X x={1555} y={866} w={20.500} s={9.500} f="#605e5c">1 765</X>
        <X x={1686} y={812} w={26} s={10} f="#3b3a39">mobile</X>
        <X x={1686} y={822} w={21} s={9.500} f="#605e5c">1 056</X>
        <X x={1686} y={856} w={32.500} s={10.500} b={700} f="#252423">desktop</X>
        <X x={1686} y={866} w={14} s={9.500} f="#605e5c">656</X>
        <X x={1686} y={900} w={22} s={10} f="#3b3a39">tablet</X>
        <X x={1817} y={812} w={87} s={10.500} b={700} f="#252423">BMW-keyauto-krd.ru</X>
        <X x={1817} y={822} w={13.500} s={9.500} f="#605e5c">203</X>
        <X x={1817} y={856} w={36.500} s={10} f="#3b3a39">yandex.ru</X>
        <X x={1817} y={866} w={14} s={9.500} f="#605e5c">192</X>
        <X x={1817} y={900} w={26.500} s={10} f="#3b3a39">google</X>
      </g>
    </svg>
  );
}

const saleGrid = "grid grid-cols-[178px_43px_63px_6px_107px_7px_99px_65px_55px_3px_107px_43px_23px]";

function Sales() {
  return (
    <section className={`flex h-[536px] w-[929px] flex-col border-r border-[#9a9a9a] text-[#4b0846] ${COMIC}`}>
      <Ruler w="w-[935px]" />
      <header className="ml-[5px] flex h-[110px] w-[914px] shrink-0 border-b border-[#f6d5fb] bg-[#eaa1f8]">
        <h1 className="flex w-[257px] shrink-0 flex-col pt-[20px] pl-7 text-[27px] leading-[38px] font-bold text-white">
          <T w={96}>Анализ</T>
          <T w={95} className="ml-[104px]">продаж</T>
        </h1>
        <Slicer title="Автомобиль" tw={81} value="Multiple selec..." vw={69} className="mt-[18px] h-[74px] w-[118px]" />
        <Slicer title="Локация" tw={56} value="All" vw={13} className="mt-[17px] ml-[46px] h-[75px] w-[119px]" />
        <Slicer title="Календарь" tw={75} value="February 2020" vw={62} off className="mt-[18px] ml-[47px] h-[77px] w-[118px]" />
        <Slicer title="Источник" tw={62} value="All" vw={13} className="mt-[17px] ml-[46px] h-[75px] w-[119px]" />
        <HelpIcon className="mt-[5px] ml-[15px]" />
      </header>

      <div className="ml-[5px] flex h-[197px] shrink-0 pt-[14px]">
        <Funnel />
        <div className={`ml-[5px] w-[290px] ${SEGOE}`}>
          <div className="flex pt-[7px]">
            <Kpi value="4793" vw={46} label="Приход к дилеру for Kr..." lw={130.500} className="ml-[2px]" />
            <Kpi value="7 855" vw={53} label="Конверсия for YaBro..." lw={115.500} className="ml-5" />
          </div>
          <div className="mt-[6px]"><RegionMap /></div>
        </div>
        <DecompositionTree />
      </div>

      <div className="ml-[9px] flex">
        <div className="w-[799px]">
          <div className="flex h-[40px] pt-[15px] text-xs leading-5">
            <T w={31} className="ml-[73px] [-webkit-text-stroke:0.2px_#4b0846]">Region</T>
            <T w={33} className="ml-20">Сессии</T>
            <T w={50} className="ml-[13px]">Конверсии</T>
            <T w={100} className="ml-[13px]">Конверсии пред. мес.</T>
            <T w={98.500} className="ml-[11px]">Динамика конверсии</T>
            <T w={45} className="ml-[14.500px]">Приходы</T>
            <T w={47} className="ml-[13.500px]">Просчеты</T>
            <T w={81} className="ml-[16.500px]">Коверсия/сессии</T>
            <span className="mt-[15px] ml-[17px] flex h-[3px]"><Caret /></span>
            <T w={42} className="ml-[2px]">Продажи</T>
          </div>
          <div className={`h-[144px] overflow-hidden border-t border-[#7a1f78] ${SEGOE}`}>
            {sales.map((s) => (
              <div key={s.name} className={`h-[21.800px] items-stretch text-[12.500px] leading-[21px] text-[#333] ${saleGrid}`}>
                <div className={`flex items-center border-r border-b border-r-[#5f1260] border-b-[#dba8dc] pl-1 text-xs text-[#4b0846] ${COMIC}`}>
                  <svg viewBox="0 0 8 8" className="mr-[5px] h-2 w-2" fill="none" stroke="#c58fc6"><path d="M.5.500h7v7h-7zM2 4h4M4 2v4" /></svg>
                  <T w={s.nw} className="[-webkit-text-stroke:0.2px_#4b0846]">{s.name}</T>
                </div>
                <div className="flex justify-end border-b border-[#dba8dc] pr-px"><T w={figW(s.v[0], 6.250)}>{s.v[0]}</T></div>
                <div className="flex justify-end border-b border-[#dba8dc] pr-px"><T w={figW(s.v[1], 6.250)}>{s.v[1]}</T></div>
                <div className="border-b border-[#dba8dc]" />
                <div className="flex items-center justify-between border-b border-l border-b-[#dba8dc] border-l-[#333] pr-px [border-left-style:dashed]">
                  <span className="h-[15px] bg-[#ea98f5]" style={{ width: s.v[2] }} />
                  <T w={s.v[3].length * 7.1}>{s.v[3]}</T>
                </div>
                <div className="border-b border-[#dba8dc]" />
                <div className="border-b border-[#dba8dc]"><Spark pts={s.line} /></div>
                <div className="flex justify-end border-b border-[#dba8dc] pr-px"><T w={figW(s.v[4], 6.150)}>{s.v[4]}</T></div>
                <div className="flex justify-end border-b border-[#dba8dc] pr-px"><T w={figW(s.v[5], 6.150)}>{s.v[5]}</T></div>
                <div className="border-b border-[#dba8dc]" />
                <div className={`flex justify-end border-b border-[#dba8dc] pr-[3px] ${s.dark ? "bg-[#b964b8]" : "bg-[#fbcffb]"}`}><T w={22}>{s.v[6]}</T></div>
                <div className="flex justify-end border-b border-[#dba8dc]"><T w={figW(s.v[7], 6.150)}>{s.v[7]}</T></div>
                <div className="flex items-center border-b border-[#dba8dc] pl-1">
                  <span className={`h-[15px] w-[15px] rounded-full border ${s.ok ? "border-[#3f7f56] bg-[#63b078]" : "border-[#b5382a] bg-[#f2695c]"}`} />
                </div>
              </div>
            ))}
          </div>
          <div className={`h-[22px] text-[12.500px] leading-[26px] font-bold text-[#252423] ${saleGrid} ${SEGOE}`}>
            <div className={`h-[22px] border-r border-[#5f1260] pl-[17px] text-xs leading-[20px] font-normal text-[#4b0846] [-webkit-text-stroke:0.2px_#4b0846] ${COMIC}`}><T w={24}>Total</T></div>
            <div className="flex justify-end pr-px"><T w={35.500}>28044</T></div>
            <div className="flex justify-end pr-px"><T w={41}>11 626</T></div>
            <div />
            <div className="flex justify-end"><T w={25}>54%</T></div>
            <div />
            <Spark pts={[39, 23, 12, 14, 15, 18, 22, 29, 25, 19, 15, 14, 20, 34, 38, 20, 50]} />
            <div className="flex justify-end pr-[2px]"><T w={32.500}>3 591</T></div>
            <div className="flex justify-end pr-px"><T w={32.500}>3 591</T></div>
            <div />
            <div className="flex justify-end pr-[2px]"><T w={24.500}>41%</T></div>
            <div className="col-span-2 flex justify-end pr-1"><T w={33}>1 765</T></div>
          </div>
        </div>
        <div className="mt-[15px] ml-1 h-[12px] w-[5px] rounded-full bg-[#b0aeac]" />
        <div className="mt-[66px] ml-1 flex h-[46px] w-[98px] flex-col items-center justify-center border-2 border-[#f88fdf] pt-[2px] text-[14.500px] leading-[18px] font-bold">
          <T w={19}>По</T>
          <T w={66}>продажам</T>
        </div>
      </div>
      <div className="mt-auto mb-[7px] w-[926px] border-t-2 border-dotted border-[#555]" />
    </section>
  );
}

/* ---------- panel 5: Power BI Desktop window ---------- */

const K = "#3b3a39";
const B = "#1b6ec2";
const F = "#83beec";
const G = "#c8c6c4";

function Ic({ children, w = 30, h = 32, className = "" }: { children: ReactNode; w?: number; h?: number; className?: string }) {
  return (
    <svg viewBox={`0 0 ${w} ${h}`} width={w} height={h} className={`shrink-0 ${className}`} fill="none" stroke={K} strokeWidth="1.300">
      {children}
    </svg>
  );
}
const doc = "M2 1.500h10l7 7v8M12 1.500v7h7M2 1.500v26h10";

const icons: Record<string, ReactNode> = {
  getData: (
    <>
      <path d="M11 27.500c-5 0-9-1-9-3V5M20 5v10" />
      <ellipse cx="11" cy="5" rx="9" ry="3.500" />
      <path d="M13 16h15v14H13z" fill="#fff" />
      <path d="M13 16h15v4H13z" fill={G} />
      <path d="M13 25h15M18 20v10M23 20v10" />
    </>
  ),
  excel: (
    <>
      <path d={doc} stroke="#777" />
      <rect x="14" y="16" width="14" height="14" fill="#107c41" stroke="none" />
      <path d="M18 19.500l6 7M24 19.500l-6 7" stroke="#fff" strokeWidth="1.800" />
    </>
  ),
  oneLake: (
    <>
      <circle cx="15" cy="15.500" r="12" />
      <path d="M5 9C7 3 13 0 19 4c5 2 7 5 7 9-3-5-8-6-12-4-3 2-5 1-7 2-1 0-2 0-2-2z" fill={K} />
      <path d="M12 9c-2 7 3 16 9 15M15 9c-1 6 2 11 7 11 4-1 5-4 4-9M7 11c-2 6 1 12 8 14" />
    </>
  ),
  sql: (
    <>
      <path d={doc} />
      <path d="M16 16v12c0 3 12 3 12 0V16" fill="#fff" stroke="#d97a1a" />
      <ellipse cx="22" cy="16" rx="6" ry="2.300" fill="#fff" stroke="#d97a1a" />
    </>
  ),
  enter: (
    <>
      <path d="M10 2h19v25H3V13" />
      <path d="M14 2h15v4H14z" fill={G} />
      <path d="M3 20h26M12 13h17M12 12v15M20 6v21" />
      <path d="M8 0v14M1 7h14" stroke="#3a9c4e" />
    </>
  ),
  dataverse: (
    <>
      <path d="M5 24C-1 14 4 3 14 3c7 0 10 5 9 11-1 5-6 7-9 5-3-3-1-7 2-7" />
      <path d="M25 6c5 10 1 20-9 21-8 0-11-5-10-11 1-5 6-7 9-5 3 3 1 7-2 7" />
      <path d="M5 24c3 2 6 2 9-1M25 6c-3-2-6-2-9 1" />
    </>
  ),
  recent: (
    <>
      <path d={doc} />
      <circle cx="21" cy="22" r="7" fill="#fff" stroke={B} />
      <path d="M21 17.500v5h4" stroke={B} />
    </>
  ),
  transform: (
    <>
      <path d="M1 2h26v8M1 2v25h10" />
      <path d="M1 2h26v4H1z" fill={G} />
      <path d="M1 14h20M1 20h13M9 6v21M18 6v12" />
      <path d="M10 30l2-6 13-13c2-2 5 1 3.500 3L16 27z" fill="#fff" stroke={B} />
      <path d="M10 30l2-6 4 3z" fill={B} stroke={B} />
    </>
  ),
  refresh: (
    <>
      <path d={doc} />
      <path d="M14 21c1-5 9-7 12-2M27 15v5h-5M28 24c-1 5-9 7-12 2M15 30v-5h5" stroke="#3a9c4e" />
    </>
  ),
  newVisual: (
    <>
      <rect x="1" y="13" width="7" height="15" fill={F} stroke={B} />
      <rect x="8" y="2" width="7" height="26" fill="#fff" />
      <rect x="16" y="7" width="7" height="21" fill={G} stroke="#888" />
      <path d="M21 16v15M14 24h15" stroke="#3a9c4e" />
    </>
  ),
  textBox: (
    <>
      <rect x="1.500" y="4" width="27" height="23" />
      <g fill={B} stroke="none"><path d="M0 2.500h3v3H0zM27 2.500h3v3h-3zM0 25.500h3v3H0zM27 25.500h3v3h-3z" /></g>
      <path d="M10 22l5-13 5 13M12 18h6" stroke={B} strokeWidth="1.600" />
    </>
  ),
  more: (
    <>
      <path d="M8 27H1V12h7M8 27V2h7v25M15 7h8v6M8 27h4M18 27h6v-8" />
      <path d="M9 30l2-6 14-13c2-2 5 1 3.500 3L15 27z" fill="#fff" stroke={B} />
      <path d="M9 30l2-6 4 3z" fill={B} stroke={B} />
    </>
  ),
  measure: (
    <>
      <rect x="6" y="2" width="18" height="26" />
      <rect x="9" y="5" width="12" height="4" fill={F} stroke={B} />
      <g fill={K} stroke="none"><path d="M9 12h3v3H9zM13.500 12h3v3h-3zM18 12h3v3h-3zM9 17h3v3H9zM13.500 17h3v3h-3zM18 17h3v3h-3zM9 22h3v3H9zM13.500 22h3v3h-3zM18 22h3v3h-3z" /></g>
    </>
  ),
  quick: (
    <>
      <rect x="8" y="2" width="18" height="26" />
      <rect x="13" y="5" width="10" height="4" fill={G} stroke="#888" />
      <g fill={K} stroke="none"><path d="M12 12h3v3h-3zM16.500 12h3v3h-3zM21 12h3v3h-3zM12 17h3v3h-3zM16.500 17h3v3h-3zM21 17h3v3h-3zM12 22h3v3h-3zM16.500 22h3v3h-3zM21 22h3v3h-3z" /></g>
      <path d="M8 0h7l-5 7h4L3 20l3-9H1z" fill="#fbd27a" stroke="#d97a1a" />
    </>
  ),
  sensitivity: (
    <g stroke="#a9d0ea">
      <path d="M14 3H2v25h20V17" />
      <path d="M6 18l8-9 5 4-8 9zM9 19l7-8M16 7l5-6 7 6-5 6zM19 5l7 6" fill="#d9ecf8" />
    </g>
  ),
  publish: (
    <>
      <path d="M2 28V17h8v11zM10 17v-7h7v18h-7M17 28h3M11 10V2h8v10" />
      <path d="M24 31V15M18 21l6-6 6 6" stroke={B} />
    </>
  ),
};

type Btn = { icon: string; w: number; lines: [string, number][]; chev?: boolean; shift?: string; dim?: boolean };
type Group = { name: string; nameW: number; w: string; pad: string; items: Btn[] };
const groups: Group[] = [
  {
    name: "Data", nameW: 20, w: "w-[383px]", pad: "pl-[7px]",
    items: [
      { icon: "getData", w: 40, lines: [["Get", 19.5], ["data", 23.5]], chev: true, shift: "translate-x-[4px]" },
      { icon: "excel", w: 60, lines: [["Excel", 26.5], ["workbook", 53]], shift: "translate-x-[3px]" },
      { icon: "oneLake", w: 72, lines: [["OneLake data", 72.5], ["hub", 20]], chev: true, shift: "translate-x-[1px]" },
      { icon: "sql", w: 46, lines: [["SQL", 21], ["Server", 33.5]], shift: "translate-x-[3px]" },
      { icon: "enter", w: 32, lines: [["Enter", 27], ["data", 23.5]] },
      { icon: "dataverse", w: 66, lines: [["Dataverse", 52]] },
      { icon: "recent", w: 46, lines: [["Recent", 36], ["sources", 39]], chev: true, shift: "translate-x-[4px]" },
    ],
  },
  {
    name: "Queries", nameW: 34, w: "w-[117px]", pad: "pl-[8px]",
    items: [
      { icon: "transform", w: 56, lines: [["Transform", 51.5], ["data", 23.5]], chev: true, shift: "translate-x-[1px]" },
      { icon: "refresh", w: 44, lines: [["Refresh", 38.5]], shift: "translate-x-[3px]" },
    ],
  },
  {
    name: "Insert", nameW: 25, w: "w-[148px]", pad: "pl-[10px]",
    items: [
      { icon: "newVisual", w: 35, lines: [["New", 23.5], ["visual", 29]], shift: "translate-x-[2px]" },
      { icon: "textBox", w: 46, lines: [["Text", 21], ["box", 19.5]] },
      { icon: "more", w: 42, lines: [["More", 28], ["visuals", 34]], chev: true, shift: "translate-x-[3px]" },
    ],
  },
  {
    name: "Calculations", nameW: 53, w: "w-[115px]", pad: "pl-2",
    items: [
      { icon: "measure", w: 50, lines: [["New", 23.5], ["measure", 45]], shift: "-translate-x-[1px]" },
      { icon: "quick", w: 47, lines: [["Quick", 31], ["measure", 44.5]], shift: "-translate-x-[3px]" },
    ],
  },
  { name: "Sensitivity", nameW: 44, w: "w-[74px]", pad: "pl-0", items: [{ icon: "sensitivity", w: 74, lines: [["Sensitivity", 53], ["", 0]], chev: true, dim: true, shift: "translate-x-[3px]" }] },
  { name: "Share", nameW: 25, w: "w-[59px]", pad: "pl-0", items: [{ icon: "publish", w: 58, lines: [["Publish", 38]], shift: "translate-x-[2px]" }] },
];

const MiniChev = () => (
  <svg viewBox="0 0 6 5" className="ml-[3px] h-[5px] w-[6px]" fill="none" stroke="currentColor" strokeWidth="1.200"><path d="M.5 1L3 3.500 5.500 1" /></svg>
);

function Ribbon() {
  return (
    <div className="flex h-[88px] text-[12.500px] leading-4 text-[#333]">
      <div className="flex w-[161px] flex-col border-r border-[#d2d0ce]">
        <div className="flex h-[76px] pl-[13px] text-[#bdbbb9]">
          <div className="flex w-[32px] flex-col items-center pt-[4px]">
            <Ic w={30} h={32}>
              <path d="M7 4H2v24h10M20 4h3v7" stroke="#f5d9b5" strokeWidth="2" />
              <path d="M7 7h12V4h-3c0-4-6-4-6 0H7zM15 12h13v17H15z" fill="#fff" stroke="#bdbbb9" />
            </Ic>
            <T w={28} className="mt-[2px]">Paste</T>
          </div>
          <div className="-mt-px ml-[7px] flex flex-col">
            <div className="flex h-6 items-center gap-1">
              <Ic w={16} h={16}><path d="M5 1l5 10M11 1L6 11" stroke="#bdbbb9" /><circle cx="5" cy="13" r="2" stroke="#a9d0ea" /><circle cx="11" cy="13" r="2" stroke="#a9d0ea" /></Ic>
              <T w={20}>Cut</T>
            </div>
            <div className="flex h-6 items-center gap-1">
              <Ic w={16} h={16}><path d="M5 13H1V1h6l2 2M7 4h5l3 3v8H7zM9 9h4M9 12h4" stroke="#bdbbb9" /></Ic>
              <T w={28}>Copy</T>
            </div>
            <div className="flex h-6 items-center gap-1">
              <Ic w={16} h={16}><path d="M15 1l-5 4M7 4l5 5 2-2-5-5z" stroke="#bdbbb9" /><path d="M7 4L1 8l6 7 5-6" fill="#fbe3c8" stroke="#e8b98a" /></Ic>
              <T w={79}>Format painter</T>
            </div>
          </div>
        </div>
        <T w={43.500} className="mx-auto text-[10px] leading-3">Clipboard</T>
      </div>
      {groups.map((g) => (
        <div key={g.name} className={`flex flex-col border-r border-[#d2d0ce] ${g.w}`}>
          <div className={`flex h-[76px] ${g.pad}`}>
            {g.items.map((b, i) => (
              <div key={i} className={`flex shrink-0 flex-col items-center pt-[4px] ${b.dim ? "text-[#bdbbb9]" : ""}`} style={{ width: b.w }}>
                <Ic className={`mb-[2px] ${b.shift ?? ""}`}>{icons[b.icon]}</Ic>
                {b.lines.map(([t, w], j) => (
                  <span key={j} className="flex h-4 items-center">
                    {t && <T w={w}>{t}</T>}
                    {b.chev && j === 1 && <MiniChev />}
                  </span>
                ))}
              </div>
            ))}
          </div>
          <T w={g.nameW} className="mx-auto text-[10px] leading-3">{g.name}</T>
        </div>
      ))}
      <svg viewBox="0 0 10 6" className="mt-auto mr-[5px] mb-[6px] ml-auto h-[6px] w-[9px]" fill="none" stroke="#333" strokeWidth="1.800"><path d="M1 5l4-4 4 4" /></svg>
    </div>
  );
}

const ax = <path d="M1 1v16h17" stroke={K} />;
const vizIcons: ReactNode[] = [
  <>{ax}<path d="M1 3h6v3H1zM1 8h9v3H1z" fill={F} stroke={B} /><path d="M7 3h5v3H7zM10 8h6v3h-6zM1 12.500h13v3H1z" fill={G} stroke="#777" /></>,
  <>{ax}<path d="M4 11h4v6H4z" fill="#fff" /><path d="M4 6h4v5H4z" fill={F} stroke={B} /><path d="M12 3h4v8h-4z" fill={G} stroke="#777" /><path d="M12 11h4v6h-4z" fill="#fff" /></>,
  <>{ax}<path d="M1 2h16v3.500H1z" fill={F} stroke={B} /><path d="M1 5.500h9v3H1z" fill="#fff" /><path d="M1 9h11v3H1zM1 13h16v3H1z" fill={G} stroke="#777" /></>,
  <>{ax}<path d="M2 2h4v15H2z" fill={F} stroke={B} /><path d="M6 6h3v11H6zM12 10h3v7h-3z" fill="#fff" /><path d="M9 9h3v8H9zM15 6h3v11h-3z" fill={G} stroke="#777" /></>,
  <>{ax}<path d="M1 3h16v4H1z" fill={F} stroke={B} /><path d="M1 9h10v3H1z" fill="#fff" /><path d="M11 9h6v3h-6z" fill={G} stroke="#777" /><path d="M1 13.500h15v2H1z" fill={G} stroke="#777" /></>,
  <>{ax}<path d="M4 3h4v14H4z" fill="#fff" /><path d="M4 3h4v10H4z" fill={F} stroke={B} /><path d="M12 3h4v6h-4z" fill={G} stroke="#777" /><path d="M12 9h4v8h-4z" fill="#fff" /></>,
  <>{ax}<path d="M1 14l6-7 5 4 6-5" stroke={K} strokeWidth="1.400" /><path d="M1 11l5 2 6-7 6 3" stroke={B} strokeWidth="1.400" /></>,
  <><path d="M8 7l5-6 5 8v7H9z" fill={G} stroke="#777" /><path d="M1 11L7 3l6 8" fill="#fff" /><path d="M1 16.500L8 8l4 5 2-2 4 5.500z" fill={F} stroke={B} /></>,
  <>{ax}<path d="M1 4l6 5 4-4 3 3 4-4v7l-4 4-3-3-4 3-6-5z" fill={F} stroke={B} /></>,
  <>{ax}<path d="M4 2h4v12H4z" fill={F} stroke={B} /><path d="M12 2h4v9h-4z" fill={G} stroke="#777" /><path d="M1 15l5-4 5 3 6-6" /></>,
  <>{ax}<path d="M8 1h4v16H8z" fill="#fff" /><path d="M3 8h4v9H3z" fill={F} stroke={B} /><path d="M13 8h4v9h-4z" fill={G} stroke="#777" /><path d="M1 15l6-4 5 3 5-6" /></>,
  <>{ax}<path d="M3 13c3-3 5-2 7 0s5 1 7-3M3 10c3 4 10 4 15-2M3 15.500h14" stroke="#e07b1a" strokeWidth="2" /><path d="M2 3c4 6 9 7 16 0v5c-7 6-12 5-16 0z" fill={F} stroke={B} /></>,
  <>{ax}<path d="M3 5h3v12H3zM6 5h3M12 9h2v8" fill="#fff" /><path d="M9 5h3v6H9z" fill={F} stroke={B} /><path d="M14 1v12M17 1v16" stroke={K} /></>,
  <><path d="M1 2h17v5H1zM4 7h11v4H4zM7 11h5v5H7z" fill={F} stroke={B} /></>,
  <>{ax}<g stroke="none"><path d="M13 2h3v3h-3zM6 11h3v3H6z" fill={K} /><path d="M5 4h3v3H5zM10 8h3v3h-3zM14 12h3v3h-3z" fill={F} /></g></>,
  <><circle cx="9.500" cy="9" r="8" fill="#fff" /><path d="M9.500 1a8 8 0 0 1 6 13L9.500 9z" fill={F} stroke={B} /></>,
  <><circle cx="9.500" cy="9" r="6" stroke={F} strokeWidth="5" /><circle cx="9.500" cy="9" r="8.300" stroke={B} /><circle cx="9.500" cy="9" r="3.600" stroke={B} /><path d="M2 5l4 2" /></>,
  <><path d="M1 1h17v16H1z" fill="#fff" /><path d="M1 1h8v9H1zM1 10h8v7H1z" fill={F} stroke={B} /><path d="M9 6h9M13 6v11" /></>,
  <><circle cx="10" cy="8" r="6" fill="#e6efe6" /><path d="M6 6l3-2 3 2-2 3-2-1zM11 10l3 0-1 3z" fill="#2f8f46" stroke="none" /><path d="M4 2c-4 5-1 13 7 13M10 15v3M5 18h10" /></>,
  <><path d="M1 3h6l4 2 6-3v8l-4 2-1 4-5-4-5-2z" fill={F} stroke={B} /><path d="M7 3l4 2 6-3v6l-7 1z" fill={G} stroke="#777" /></>,
  <><path d="M12 1L3 17l8-4z" fill="#5fb4e8" stroke="none" /><path d="M12 1l5 16-6-4z" fill="#1b6ec2" stroke="none" /></>,
  <><path d="M1 14a8.500 8.500 0 0 1 17 0h-4a4.500 4.500 0 0 0-9 0z" fill="#fff" /><path d="M10 6a8.500 8.500 0 0 1 8 8h-4a4.500 4.500 0 0 0-3-4z" fill={F} stroke={B} /><path d="M9 14l4-6" /></>,
  <><path d="M1 3h17v12H1z" fill="#fff" /><text x="9.500" y="12" fontSize="8" textAnchor="middle" textLength="14" stroke="none" fill={B}>123</text></>,
  <><path d="M1 2h17v15H1z" fill="#fff" /><path d="M4 4v11" stroke={K} /><path d="M6 6h8M6 9h9M6 12h6" stroke={B} strokeWidth="1.600" /></>,
  <><path d="M1 3h17v12H1z" fill="#fff" /><path d="M3 11l3-5 3 5z" fill="#4aa35a" stroke="none" /><path d="M10 6h6l-3 5z" fill="#d13438" stroke="none" /></>,
  <><path d="M18 8V2H1v14h8M3 6h3v3H3zM3 11h3v3H3z" /><path d="M1 2h17v2H1z" fill={G} /><path d="M9 9h9l-3.500 4v4l-2-1v-3z" fill="#fff" /></>,
  <><path d="M1 2h17v15H1zM1 9h17M1 13h17M7 5v12M12.500 5v12" fill="#fff" /><path d="M1 2h17v3H1z" fill={G} /></>,
  <><path d="M1 2h17v15H1z" fill="#fff" /><path d="M12 5h6v12h-6zM7 9h5v4H7z" fill={F} stroke={B} /><path d="M1 2h17v3H1z" fill={G} /><path d="M1 9h17M1 13h17M7 5v12M12 5v12" /></>,
  <><text x="9.500" y="14.500" fontSize="15" fontWeight="700" textAnchor="middle" stroke="none" fill="#1b78c8">R</text></>,
  <><text x="9" y="14" fontSize="14.500" fontWeight="700" textAnchor="middle" textLength="18" lengthAdjust="spacingAndGlyphs" stroke="none" fill="#1b78c8">Py</text></>,
  <>{ax}<path d="M1 4h12M1 8.500h8M1 13h5" /><circle cx="15" cy="4" r="2" fill={F} stroke={B} /><path d="M9 7h3v3H9zM6 12h3v3H6z" fill={G} stroke="#777" /></>,
  <><path d="M6 9h4M10 3v12M10 3h2M10 15h2M10 9h2" /><path d="M1 7.500h5v3H1zM12 1.500h6v4h-6zM12 7h6v4h-6zM12 12.500h6v4h-6z" fill={F} stroke={B} /></>,
  <><path d="M1 3h17v10H9l-4 4v-4H1z" fill="#fff" stroke={B} /></>,
  <><path d="M4 6V1h8l5 4v12H4v-6M12 1v4h5M9 9h6M9 12h6" /><path d="M1 6h4v3H1z" fill={F} stroke={B} /></>,
  <><path d="M5 1h9v6c0 6-9 6-9 0zM5 3H1c0 4 2 5 4 5M14 3h4c0 4-2 5-4 5M9.500 12v3M6 17h7l-1-2H7z" /></>,
  <><path d="M3 1h9l5 5v11H3z" fill="#fff" /><path d="M12 1v5h5" /><path d="M6 15V11M9.500 15v-2M13 15V8" strokeWidth="2" /></>,
  <><path d="M6 4h12v12H1V11" fill="#fff" /><path d="M5 0h4L7 4h3L2 12l2-5H1z" fill="#f9c36a" stroke="#d97a1a" /><text x="11" y="14" fontSize="8" textAnchor="middle" textLength="13" stroke="none" fill={B}>123</text></>,
  <><path d="M8 2h10v9M2 9v8h10" stroke={B} /><path d="M6 15c4 0 2-5 5-7s3-4 6-5v7l-4 3-2 4z" fill={F} stroke={B} /><path d="M1 3a3 3 0 0 1 6 0c0 3-3 6-3 6S1 6 1 3z" fill="#e07b1a" stroke="none" /><circle cx="16" cy="16" r="2.200" fill="#e07b1a" stroke="none" /></>,
  <g stroke="#9b4fa8"><path d="M9.500 1l8.500 8-8.500 8L1 9zM5.500 5l8 8M13.500 5l-8 8M9.500 5l-4 4 4 4 4-4z" /></g>,
  <g stroke={B}><path d="M1 3h10l7 6-7 6H1l7-6zM6 3l-2 2.500M11 4L4 13M15 7l-8 8" /></g>,
  <g fill="#605e5c" stroke="none"><circle cx="3" cy="9" r="1" /><circle cx="9.500" cy="9" r="1" /><circle cx="16" cy="9" r="1" /></g>,
];

const tableIcon = (
  <svg viewBox="0 0 14 13" className="h-[13px] w-[14px]" fill="none" stroke="#3b3a39"><path d="M.5 1.500h13v10.500H.5zM.5 3h13M.5 6h13M.5 9h13M5 3v9M9 3v9" /></svg>
);
const calcTableIcon = (
  <svg viewBox="0 0 16 15" className="-ml-px h-[15px] w-4" fill="none" stroke="#3b3a39"><path d="M7 12H.5V1.500h12V5M.5 4h12M.5 8h6M4.500 2v10M8.500 2v3M8.500 6.500h7v8h-7zM10 8.500h4M10 11h1M13 11h1M10 13h1M13 13h1" /></svg>
);
const measureIcon = (
  <svg viewBox="0 0 14 15" className="h-[15px] w-[14px]" fill="none" stroke="#3b3a39"><path d="M1 13V.5h11M3.500 3h9.500v11.500H3.500zM5.500 5.500h6M5.500 8.500h1M8 8.500h1M10.500 8.500h1M5.500 11.500h1M8 11.500h1M10.500 11.500h1" /></svg>
);
const fields: [string, number, ReactNode][] = [
  ["Меры", 32, measureIcon],
  ["Данные из CRM", 87, tableIcon],
  ["Данные из CRM (2)", 104.5, tableIcon],
  ["Календарь 2", 68, calcTableIcon],
  ["Маркетинговые данные", 132, tableIcon],
  ["Справочник", 67, tableIcon],
  ["Currency", 47, tableIcon],
  ["Table Справочник_кли...", 131, calcTableIcon],
];

const Loupe = ({ className, stroke }: { className: string; stroke: string }) => (
  <svg viewBox="0 0 15 15" className={className} fill="none" stroke={stroke} strokeWidth="1.100"><circle cx="9" cy="5.500" r="4.500" /><path d="M5.800 9L.800 14" /></svg>
);
const Chevrons = ({ left }: { left?: boolean }) => (
  <svg viewBox="0 0 13 12" className={`h-3 w-[13px] ${left ? "rotate-180" : ""}`} fill="none" stroke="#3b3a39" strokeWidth="1.200"><path d="M1 .5L6.500 6 1 11.500M6.500.500L12 6l-5.500 5.500" /></svg>
);

function TooltipFunnel() {
  return (
    <svg viewBox="591 1331 319 239" className="h-[239px] w-[319px]">
      <text x={757} y={1361.500} textLength={78} lengthAdjust="spacingAndGlyphs" fontSize={23} fill="#4b0846" stroke="#4b0846" strokeWidth=".4">(not set</text>
      <g className={SEGOE}>
        <X x={774} y={1401} w={31.500} s={12} f="#706e6c">100%</X>
        <path d="M683.500 1409H894M683.500 1404V1414.500M894 1404V1414.500M783 1534.500H794.500M783 1529V1540M794.500 1529V1540" stroke="#b3b0ad" />
        <rect x="684" y="1419" width="210" height="19.500" fill="#e3e3e3" />
        <rect x="745" y="1440.500" width="88" height="19.500" fill="#f9b6fa" />
        <rect x="766.500" y="1462" width="44.500" height="19.500" fill="#fa9ef9" />
        <rect x="778" y="1484" width="22" height="19.500" fill="#bb62b8" />
        <rect x="783" y="1505" width="11.500" height="20" fill="#7a1f69" />
        <X x={841} y={1457} w={26.500} s={13} f="#706e6c">42%</X>
        <X x={819} y={1478} w={27} s={13} f="#706e6c">50%</X>
        <X x={808} y={1500} w={27} s={13} f="#706e6c">50%</X>
        <X x={802.500} y={1521} w={26.500} s={13} f="#706e6c">49%</X>
        <X x={776} y={1554} w={27} s={12} f="#706e6c">5,2%</X>
      </g>
      <X x={599} y={1433} w={45.500} s={13.500}>Сессии</X>
      <X x={599} y={1455} w={68} s={13.500}>Конверсии</X>
      <X x={600} y={1476} w={60.500} s={13.500}>Приходы</X>
      <X x={600} y={1498} w={64} s={13.500}>Просчеты</X>
      <X x={600} y={1519} w={58} s={13.500}>Продажи</X>
    </svg>
  );
}

function Hidden() {
  return <svg viewBox="0 0 13 11" className="h-[11px] w-[13px]" fill="none" stroke="#555"><path d="M1 5c3-4 8-4 11 0M4 9c-1-1-1-4 1-4M1 1l11 9M9 7c0 2-2 3-4 2" /></svg>;
}

const menu: [string, number, string][] = [
  ["File", 20, "ml-[23px]"],
  ["Home", 38, "ml-[38px]"],
  ["Insert", 35, "ml-[31px]"],
  ["Modeling", 59, "ml-8"],
  ["View", 30, "ml-[31px]"],
  ["Optimize", 56.5, "ml-[31px]"],
  ["Help", 29, "ml-[31px]"],
];

function Desktop() {
  return (
    <section className={`flex h-[768px] w-[1366px] flex-col bg-white text-[#252423] ${SEGOE}`}>
      <div className="flex h-[34px] shrink-0 items-center bg-[#3b3a39] text-[12.500px] text-white">
        <svg viewBox="0 0 16 16" className="ml-[17px] h-4 w-4" fill="none" stroke="#e6e6e6"><path d="M.500.500h15v15H2L.500 14zM3.500.500v6h9v-6M4.500 15.500v-5h7v5M6.500 13v2" /></svg>
        <svg viewBox="0 0 15 16" className="ml-[15px] h-4 w-[15px]" fill="none" stroke="#e6e6e6" strokeWidth="1.200"><path d="M1 1v6h6M1 7c4-6 12-6 12 0 0 3-2 5-6 8" /></svg>
        <svg viewBox="0 0 15 16" className="ml-[16px] h-4 w-[15px] opacity-40" fill="none" stroke="#e6e6e6" strokeWidth="1.200"><path d="M14 1v6H8M14 7C10 1 2 1 2 7c0 3 2 5 6 8" /></svg>
        <T w={224} className="mt-[7px] ml-[8px] text-[13px]">Power BI_sem_7_HW_1 - Power BI Desktop</T>
        <div className="ml-[226px] flex h-6 w-[400px] items-center rounded-[2px] bg-[#d2d2d2] pl-[18px] text-[13.500px] text-[#3c5a53]">
          <Loupe className="mr-3 h-[15px] w-[15px]" stroke="#3c4a47" />
          <T w={41}>Search</T>
        </div>
        <T w={37} className="mt-px ml-[201px]">Sign in</T>
        <svg viewBox="0 0 20 20" className="ml-[9px] h-5 w-5"><circle cx="10" cy="10" r="10" fill="#fff" /><circle cx="10" cy="5.500" r="2.800" fill="none" stroke="#222" strokeWidth="1.600" /><path d="M4.500 11h11c0 3-2 5-5.500 5s-5.500-2-5.500-5z" fill="none" stroke="#222" strokeWidth="1.600" /></svg>
        <svg viewBox="0 0 100 12" className="ml-[32px] h-3 w-[100px]" fill="none" stroke="#fff"><path d="M0 6.500h10M44.500 3.500h7v8h-7zM46.500 3.500v-2h7v8h-2M88 1l9.500 10M97.500 1L88 11" /></svg>
      </div>
      <div className="relative z-10 flex h-[126px] shrink-0 flex-col bg-[#fafafa] shadow-[0_1px_3px_rgba(0,0,0,0.22)]">
        <div className="flex h-[38px] text-[13.500px] leading-[33px] text-[#333]">
          {menu.map(([t, w, m]) => (
            <span key={t} className={`flex h-[31px] ${m} ${t === "Home" ? "border-b-[3px] border-[#117865] font-bold text-[#252423]" : ""}`}>
              <T w={w}>{t}</T>
            </span>
          ))}
        </div>
        <Ribbon />
      </div>

      <div className="flex h-[583px] shrink-0 bg-[#f3f2f1]">
        <div className="w-[1004px]">
          <div className="flex h-[548px]">
            <div className="w-10 bg-[#f3f2f1]">
              <div className="flex h-10 items-center border-l-[3px] border-[#117865] pl-[10px]">
                <svg viewBox="0 0 15 15" className="h-[15px] w-[15px]" fill="none" stroke="#252423" strokeWidth="1.200"><path d="M1 .5v13.500h14M3.500 5h2v7.500h-2zM7.500 7.500h2v5h-2zM11.500 2h2v10.500h-2z" /></svg>
              </div>
              <div className="flex h-10 items-center pl-[13px]">
                <svg viewBox="0 0 16 16" className="h-4 w-4" fill="none" stroke="#605e5c"><path d="M.5 1.500h15v14H.5zM.5 4h15M.5 8h15M.5 12h15M5.500 4v11.500M10.500 4v11.500" /></svg>
              </div>
              <div className="flex h-10 items-center pl-3">
                <svg viewBox="0 0 18 18" className="h-[18px] w-[18px]" fill="none" stroke="#605e5c"><path d="M.5 6.500h7v7h-7zM.5 9h7M10.500.500h7v6h-7zM10.500 3h7M10.500 11.500h7v6h-7zM10.500 14h7M4 6.500v-3h6.500M4 13.500v2h6.500" /></svg>
              </div>
            </div>
            <div className="w-[932px] border-r border-[#a8a6a4] bg-white pt-2 pl-[304px]">
              <div className={`h-[244px] w-[324px] border-2 border-dotted border-[#555] pt-px pl-px text-[#4b0846] ${COMIC}`}><TooltipFunnel /></div>
            </div>
            <div className="flex w-8 flex-col items-center bg-white pt-[13px]">
              <Chevrons left />
              <svg viewBox="0 0 12 12" className="mt-4 h-3 w-3" fill="none" stroke="#252423" strokeWidth="1.100"><path d="M11.500 1v9.500L7 8H4.500L1 6.800V5L4.500 4H7z" /></svg>
              <span className="mt-2 text-[15px] leading-[18px] font-semibold [writing-mode:vertical-rl]"><span className="tracking-[-0.200px]">Filters</span></span>
            </div>
          </div>
          <div className="flex h-[35px] items-stretch text-xs leading-[35px]">
            <div className="flex w-[311px] border-r border-[#c8c6c4]">
              <span className="ml-[50px] flex h-[33px] w-6 flex-col items-center justify-between border-b-[3px] border-[#117865] pt-2">
                <svg viewBox="0 0 20 16" className="h-4 w-5" fill="none" stroke="#252423" strokeWidth="1.300"><path d="M1 1h18v10H1zM10 11v3.500M5 15h10" /></svg>
              </span>
              <svg viewBox="0 0 12 18" className="mt-[6px] ml-[26px] h-[18px] w-3" fill="none" stroke="#555" strokeWidth="1.200"><path d="M1 1h10v16H1zM5 14.500h2" /></svg>
              <svg viewBox="0 0 26 8" className="mt-[14px] ml-[22px] h-2 w-[26px]" fill="#b0aeac"><path d="M4 0L0 4l4 4zM22 0l4 4-4 4z" /></svg>
              <T w={102} className="ml-[28px]">Анализ конверсий</T>
            </div>
            <div className="flex w-[106px] items-center gap-[2px] border-r border-[#c8c6c4] pl-[13px]"><Hidden /><T w={65}>Инструкция</T></div>
            <div className="flex w-[112px] items-center justify-center border-r border-[#c8c6c4]"><T w={71}>Расчеты DAX</T></div>
            <div className="flex w-[127px] items-center justify-center border-r border-[#c8c6c4]"><T w={86}>Анализ продаж</T></div>
            <div className="flex w-[136px] items-center gap-[4px] border-b-[3px] border-[#117865] bg-white pl-[11px] font-bold"><Hidden /><T w={95}>Воронка и город</T></div>
            <div className="flex h-[34px] w-10 items-center justify-center bg-[#117865]"><svg viewBox="0 0 10 10" className="h-[10px] w-[10px]" stroke="#fff" strokeWidth="2"><path d="M5 0v10M0 5h10" /></svg></div>
          </div>
        </div>

        <div className="w-[182px] border-x border-[#dddbd9]">
          <div className="flex h-[38px] items-center justify-between pr-2 pl-2 text-[15px] font-semibold"><T w={98.500}>Visualizations</T><Chevrons /></div>
          <div className="-mt-px flex h-4 pl-2 text-xs leading-4 font-semibold"><T w={62}>Build visual</T></div>
          <div className="mt-[4px] flex gap-[37px] pl-2">
            <svg viewBox="0 0 32 31" className="h-[31px] w-8"><rect width="32" height="31" rx="1" fill="#cfcdcb" /><path d="M4 4.500h20" stroke="#333" /><path d="M5 10h22.500v6H5zM5 20.500h22.500v6H5z" fill="#117865" stroke="#222" strokeDasharray="2 1" /></svg>
            <svg viewBox="0 0 26 27" className="mt-[3px] h-[27px] w-[26px]" fill="none" stroke="#3b3a39" strokeWidth="1.300"><path d="M9 24H2V1h11l6 7v3M13 1v7h6M24 10l-8 9M16 19c-3 0-3 4-6 5 4 2 8 0 8-3z" /></svg>
          </div>
          <svg viewBox="0 0 180 10" className="mt-[4px] h-[10px] w-[180px]" fill="none" stroke="#8a8886"><path d="M0 8.500h16l8-7 8 7h148" /></svg>
          <div className="mt-[7px] ml-[10.500px] grid h-[199px] w-[170px] grid-cols-[repeat(6,28px)] grid-rows-[repeat(7,27.950px)]">
            {vizIcons.map((v, i) => (
              <svg key={i} viewBox="0 0 19 18" className="mt-1 h-[18px] w-[19px]" fill="none" stroke={K} strokeWidth="1">{v}</svg>
            ))}
          </div>
          <div className="border-t border-[#d2d0ce] pt-[7px] text-xs">
            <div className="flex h-[18px] pl-[12px] leading-[18px]"><T w={34}>Values</T></div>
            <div className="mt-[5px] ml-1 flex h-[27px] w-[170px] items-center border border-dashed border-[#b8b6b4] bg-white pl-[10px]"><T w={106.500}>Add data fields here</T></div>
            <div className="mt-[9px] flex h-[18px] pl-[12px] leading-[18px] font-semibold"><T w={37}>Tooltip</T></div>
            <div className="mt-[6px] ml-[12px] flex h-[20px] items-center"><T w={74}>Keep all filters</T>
              <span className="ml-10 flex h-[15px] w-8 items-center justify-end gap-[2px] rounded-full bg-[#117865] pr-[4px] text-[8px] font-bold text-white"><T w={12}>On</T><span className="h-[9px] w-[9px] rounded-full bg-white" /></span>
            </div>
            <div className="mt-[9px] ml-1 flex h-[26px] w-[170px] items-center border border-dashed border-[#b8b6b4] bg-white pl-[8px]"><T w={122}>Drag tooltip fields here</T></div>
          </div>
        </div>

        <div className="w-[180px]">
          <div className="flex h-[38px] items-center justify-between pr-2 pl-2 text-[15px] font-semibold"><T w={33}>Data</T><Chevrons /></div>
          <div className="mt-[8px] ml-[4px] flex h-[27px] w-[172px] items-center gap-[7px] rounded-[2px] border border-[#605e5c] bg-white pl-[8px] text-[12.500px] text-[#444]"><Loupe className="h-[13px] w-[14px]" stroke="#444" /><T w={41}>Search</T></div>
          <ul className="mt-[9px] text-xs text-[#3b3a39]">
            {fields.map(([t, w, icon]) => (
              <li key={t} className="flex h-[23.950px] items-center pl-[9px]">
                <svg viewBox="0 0 7 13" className="h-[13px] w-[7px]" fill="none" stroke="#605e5c"><path d="M.5.500L6.500 6.500l-6 6" /></svg>
                <span className="flex w-[25px] items-center pl-[5px]">{icon}</span>
                <T w={w}>{t}</T>
              </li>
            ))}
          </ul>
        </div>
      </div>
      <div className="flex h-[23px] shrink-0 items-center border-t border-[#e1dfdd] bg-[#f3f2f1] pl-[5px] text-[11.500px] text-[#444]">
        <T w={59}>Page 5 of 5</T>
        <svg viewBox="0 0 124 14" className="ml-[1090px] h-[14px] w-[124px]" fill="none" stroke="#444"><path d="M1 7.500h4M9 7.500h99M114 7.500h8M118 3.500v8" /><path d="M56 1h4v13h-4z" fill="#444" stroke="none" /></svg>
        <T w={28} className="ml-[12px]">100%</T>
        <svg viewBox="0 0 16 12" className="ml-[13px] h-3 w-4" fill="none" stroke="#555"><path d="M.500.500h15v11H.500zM3 4.500v-2h2M11 2.500h2v2M13 7.500v2h-2M5 9.500H3v-2" /></svg>
      </div>
      <div className="h-[2px] bg-[#2b2a3a]" />
    </section>
  );
}

export default function App() {
  return (
    <main className="flex h-[2004px] w-[2004px] flex-col overflow-hidden bg-white">
      <div className="flex h-[588px] shrink-0">
        <div className="w-[995px] shrink-0"><Conversions /></div>
        <Instructions />
      </div>
      <div className="flex h-[572px] shrink-0">
        <div className="w-[991px] shrink-0"><DaxTables /></div>
        <div className="pt-[5px]"><Sales /></div>
      </div>
      <div className="pl-[244px]"><Desktop /></div>
    </main>
  );
}
